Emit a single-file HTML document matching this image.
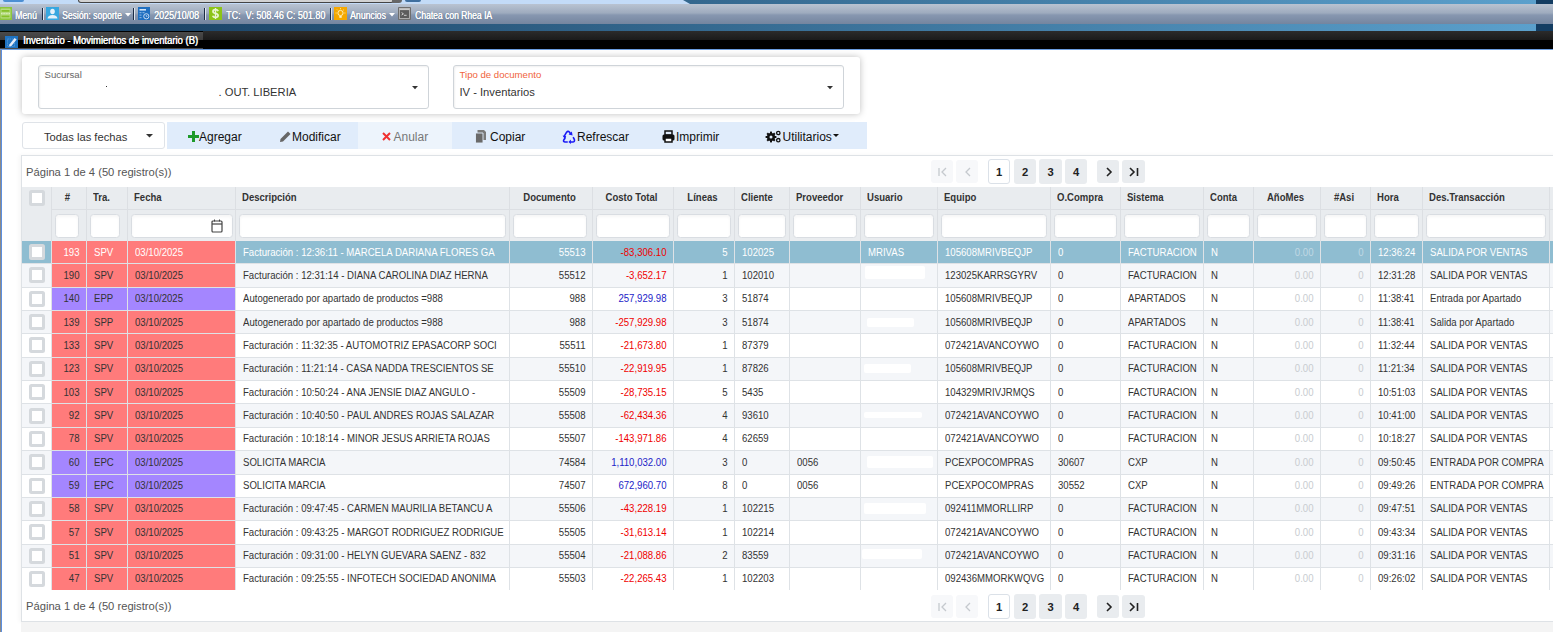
<!DOCTYPE html><html><head><meta charset="utf-8"><style>
html,body{margin:0;padding:0;}
body{width:1553px;height:632px;overflow:hidden;position:relative;background:#fff;font-family:"Liberation Sans", sans-serif;}
div{box-sizing:border-box;}
</style></head><body>
<div style="position:absolute;left:0px;top:0px;width:1553px;height:4px;background:#c3dbf7;"></div>
<div style="position:absolute;left:3px;top:0px;width:21px;height:1.6px;background:#4c8fd3;border-radius:0 0 5px 5px;"></div>
<div style="position:absolute;left:78px;top:0px;width:316px;height:3.2px;background:#d2d2d2;border:1px solid #444;border-top:none;border-radius:0 0 6px 6px;"></div>
<div style="position:absolute;left:392px;top:0px;width:10px;height:3.2px;background:#666;border-radius:0 0 5px 0;"></div>
<div style="position:absolute;left:405px;top:0px;width:16px;height:1.8px;background:#3f6f9f;border-radius:0 0 5px 5px;"></div>
<svg style="position:absolute;left:0;top:0" width="1553" height="4"><defs><linearGradient id="bg1" x1="0" x2="1553" y1="0" y2="0" gradientUnits="userSpaceOnUse"><stop offset="0" stop-color="#143a5c"/><stop offset="0.989" stop-color="#5ba0cc"/></linearGradient></defs><polygon points="683,0 1536,0 1536,4 690,4" fill="url(#bg1)"/><rect x="1536" y="0" width="17" height="4" fill="#133d62"/></svg>
<div style="position:absolute;left:0px;top:4px;width:1553px;height:20px;background:linear-gradient(#b9c3d1 0%,#9eabbe 45%,#8797b0 55%,#74859f 100%);"></div>
<svg style="position:absolute;left:-1px;top:7px" width="13" height="13" viewBox="0 0 13 13"><rect width="13" height="13" fill="#8cc63e"/><rect x="1.5" y="1.5" width="10" height="10" rx="1" fill="#b6dc80"/><rect x="2.5" y="3" width="8" height="1.8" fill="#86c02a"/><rect x="2.5" y="8.5" width="8" height="1.8" fill="#86c02a"/><line x1="2" y1="6.6" x2="11" y2="6.6" stroke="#e6f4d2" stroke-width="0.8" stroke-dasharray="1 0.6"/></svg>
<div style="position:absolute;left:14.5px;top:9.5px;white-space:nowrap;font-size:10px;color:#fff;line-height:12px;transform-origin:0 0;text-shadow:0.3px 0 0 #fff,0 0 1px rgba(20,30,60,.5);transform:scaleX(0.87);">Menú</div>
<div style="position:absolute;left:42px;top:8px;width:1px;height:12px;background:#1b2b44;"></div>
<div style="position:absolute;left:43px;top:8px;width:1px;height:12px;background:#dfe6ef;"></div>
<svg style="position:absolute;left:46px;top:7px" width="13" height="13" viewBox="0 0 13 13"><rect width="13" height="13" fill="#37a7e0"/><ellipse cx="6.5" cy="4.5" rx="2.3" ry="2.8" fill="#e6f2fa"/><path d="M1.5 11.5 Q2 8 6.5 8 Q11 8 11.5 11.5Z" fill="#e6f2fa"/></svg>
<div style="position:absolute;left:62px;top:9.5px;white-space:nowrap;font-size:10px;color:#fff;line-height:12px;transform-origin:0 0;text-shadow:0.3px 0 0 #fff,0 0 1px rgba(20,30,60,.5);transform:scaleX(0.86);">Sesión: soporte</div>
<svg style="position:absolute;left:125px;top:13px" width="6" height="4"><polygon points="0,0 6,0 3,3.5" fill="#fff"/></svg>
<div style="position:absolute;left:133px;top:8px;width:1px;height:12px;background:#1b2b44;"></div>
<div style="position:absolute;left:134px;top:8px;width:1px;height:12px;background:#dfe6ef;"></div>
<svg style="position:absolute;left:138px;top:7px" width="12" height="13" viewBox="0 0 12 13"><rect width="12" height="13" fill="#1f6fc0"/><rect x="1.5" y="2" width="6.5" height="1.6" fill="#cfe2f6"/><g fill="#7fb0e0"><rect x="1.5" y="5" width="2" height="1.2"/><rect x="4.5" y="5" width="2" height="1.2"/><rect x="1.5" y="7.5" width="2" height="1.2"/><rect x="1.5" y="10" width="2" height="1.2"/></g><circle cx="8.3" cy="9.3" r="2.6" fill="#1f6fc0" stroke="#d6e7f8" stroke-width="0.9"/><path d="M8.3 8 V9.4 H9.4" stroke="#d6e7f8" stroke-width="0.7" fill="none"/></svg>
<div style="position:absolute;left:154px;top:9.5px;white-space:nowrap;font-size:10px;color:#fff;line-height:12px;transform-origin:0 0;text-shadow:0.3px 0 0 #fff,0 0 1px rgba(20,30,60,.5);transform:scaleX(0.9);">2025/10/08</div>
<div style="position:absolute;left:204px;top:8px;width:1px;height:12px;background:#1b2b44;"></div>
<div style="position:absolute;left:205px;top:8px;width:1px;height:12px;background:#dfe6ef;"></div>
<svg style="position:absolute;left:209px;top:7px" width="13" height="13" viewBox="0 0 13 13"><rect width="13" height="13" fill="#8cc418"/><path d="M9.2 4.1 Q8.6 2.6 6.5 2.6 Q4 2.6 4 4.4 Q4 5.8 6.5 6.4 Q9.1 7 9.1 8.6 Q9.1 10.4 6.5 10.4 Q4.2 10.4 3.7 8.8" fill="none" stroke="#e8f5d0" stroke-width="1.7"/><rect x="5.8" y="1" width="1.4" height="11" fill="#e8f5d0"/></svg>
<div style="position:absolute;left:226px;top:9.5px;white-space:nowrap;font-size:10px;color:#fff;line-height:12px;transform-origin:0 0;text-shadow:0.3px 0 0 #fff,0 0 1px rgba(20,30,60,.5);transform:scaleX(0.9);">TC:&nbsp; V: 508.46 C: 501.80</div>
<div style="position:absolute;left:330px;top:8px;width:1px;height:12px;background:#1b2b44;"></div>
<div style="position:absolute;left:331px;top:8px;width:1px;height:12px;background:#dfe6ef;"></div>
<svg style="position:absolute;left:334px;top:7px" width="13" height="13" viewBox="0 0 13 13"><rect width="13" height="13" fill="#f5a800"/><circle cx="6.5" cy="6" r="2.6" fill="none" stroke="#fff3c0" stroke-width="0.9"/><rect x="5.3" y="8.8" width="2.4" height="2" fill="#fff3c0"/><g stroke="#fff3c0" stroke-width="0.7"><line x1="6.5" y1="1" x2="6.5" y2="2.2"/><line x1="1.5" y1="6" x2="2.7" y2="6"/><line x1="10.3" y1="6" x2="11.5" y2="6"/><line x1="3" y1="2.5" x2="3.8" y2="3.3"/><line x1="10" y1="2.5" x2="9.2" y2="3.3"/></g></svg>
<div style="position:absolute;left:350px;top:9.5px;white-space:nowrap;font-size:10px;color:#fff;line-height:12px;transform-origin:0 0;text-shadow:0.3px 0 0 #fff,0 0 1px rgba(20,30,60,.5);transform:scaleX(0.87);">Anuncios</div>
<svg style="position:absolute;left:389px;top:13px" width="6" height="4"><polygon points="0,0 6,0 3,3.5" fill="#fff"/></svg>
<svg style="position:absolute;left:398px;top:7px" width="13" height="13" viewBox="0 0 13 13"><rect width="13" height="13" rx="1" fill="#6e6e6e"/><rect x="1.5" y="1.5" width="10" height="10" fill="#5c5c5c" stroke="#b4b4b4" stroke-width="0.9"/><rect x="1.5" y="1.5" width="10" height="1.6" fill="#c8c8c8"/><path d="M3.6 5.6 L5.4 6.8 L3.6 8" fill="none" stroke="#e0e0e0" stroke-width="0.9"/><line x1="6" y1="8.3" x2="8.6" y2="8.3" stroke="#e0e0e0" stroke-width="0.9"/></svg>
<div style="position:absolute;left:415px;top:9.5px;white-space:nowrap;font-size:10px;color:#fff;line-height:12px;transform-origin:0 0;text-shadow:0.3px 0 0 #fff,0 0 1px rgba(20,30,60,.5);transform:scaleX(0.855);">Chatea con Rhea IA</div>
<svg style="position:absolute;left:0;top:24px" width="1553" height="7"><defs><linearGradient id="bg2" x1="0" x2="1553" y1="0" y2="0" gradientUnits="userSpaceOnUse"><stop offset="0" stop-color="#143a5c"/><stop offset="0.989" stop-color="#5ba0cc"/></linearGradient></defs><rect x="0" y="0" width="1536" height="7" fill="url(#bg2)"/><rect x="1536" y="0" width="17" height="7" fill="#133d62"/></svg>
<div style="position:absolute;left:0px;top:31px;width:1553px;height:18px;background:linear-gradient(#2b2b2b 0%,#1b1b1b 50%,#000 52%,#000 100%);"></div>
<div style="position:absolute;left:0px;top:31px;width:203px;height:18px;background:linear-gradient(#000 0px,#000 1px,#4a4a4a 1px,#3c3c3c 50%,#000 52%,#000 100%);"></div>
<svg style="position:absolute;left:5px;top:36px" width="13" height="12" viewBox="0 0 13 12"><rect width="13" height="12" fill="#1e73c2"/><rect x="2.5" y="3" width="7" height="7.5" fill="none" stroke="#5d9ad6" stroke-width="0.8" stroke-dasharray="1.4 0.8"/><path d="M4.4 8.4 L9.6 2 L11.6 3.6 L6.4 10 L4 10.6Z" fill="#e6ecf8"/></svg>
<div style="position:absolute;left:23px;top:34px;white-space:nowrap;font-size:10.5px;line-height:13px;color:#fff;transform:scaleX(0.9);transform-origin:0 0;text-shadow:0.5px 0 0 #fff;">Inventario - Movimientos de inventario (B)</div>
<div style="position:absolute;left:0px;top:49px;width:1553px;height:1px;background:#6b9de0;"></div>
<div style="position:absolute;left:0px;top:48px;width:203px;height:1px;background:#4a4a4a;"></div>
<div style="position:absolute;left:0px;top:50px;width:1px;height:582px;background:#8a8a8a;"></div>
<div style="position:absolute;left:1px;top:50px;width:1px;height:582px;background:#5b8fe0;"></div>
<div style="position:absolute;left:22px;top:57px;width:838px;height:57px;background:#fff;border-radius:3px;box-shadow:0 0 7px rgba(0,0,0,.26);"></div>
<div style="position:absolute;left:38px;top:65px;width:391px;height:44px;background:#fff;border:1px solid #cfd4d9;border-radius:3px;box-shadow:inset 1px 1px 2px rgba(0,0,0,.06);"></div>
<div style="position:absolute;left:44.5px;top:69.1px;white-space:nowrap;font-size:9.6px;line-height:11px;color:#666;">Sucursal</div>
<div style="position:absolute;left:44.5px;top:85px;white-space:nowrap;font-size:11.2px;line-height:14px;color:#333;"><span style="display:inline-block;width:174px"></span>. OUT. LIBERIA</div>
<svg style="position:absolute;left:411.5px;top:85.5px" width="6" height="4"><polygon points="0,0 6,0 3,3.2" fill="#333"/></svg>
<div style="position:absolute;left:453px;top:65px;width:391px;height:44px;background:#fff;border:1px solid #cfd4d9;border-radius:3px;box-shadow:inset 1px 1px 2px rgba(0,0,0,.06);"></div>
<div style="position:absolute;left:459.5px;top:69.1px;white-space:nowrap;font-size:9.6px;line-height:11px;color:#f0643c;">Tipo de documento</div>
<div style="position:absolute;left:459.5px;top:85px;white-space:nowrap;font-size:11.2px;line-height:14px;color:#333;">IV - Inventarios</div>
<svg style="position:absolute;left:826.5px;top:85.5px" width="6" height="4"><polygon points="0,0 6,0 3,3.2" fill="#333"/></svg>
<div style="position:absolute;left:106px;top:86px;width:1px;height:1px;background:#333;"></div>
<div style="position:absolute;left:22px;top:122px;width:143px;height:27px;background:#fff;border:1px solid #dfe3e8;border-radius:3px;"></div>
<div style="position:absolute;left:44px;top:130px;white-space:nowrap;font-size:11.2px;line-height:14px;color:#333;">Todas las fechas</div>
<svg style="position:absolute;left:146px;top:134px" width="7" height="4"><polygon points="0,0 7,0 3.5,3.5" fill="#333"/></svg>
<div style="position:absolute;left:167px;top:122px;width:191px;height:27px;background:#e0ecfb;"></div>
<div style="position:absolute;left:358px;top:122px;width:94px;height:27px;background:#edf4fc;"></div>
<div style="position:absolute;left:452px;top:122px;width:415px;height:27px;background:#e0ecfb;"></div>
<svg style="position:absolute;left:188px;top:131px" width="11" height="11" viewBox="0 0 11 11"><rect x="4" y="0" width="3" height="11" fill="#1e9a2a"/><rect x="0" y="4" width="11" height="3" fill="#1e9a2a"/></svg>
<div style="position:absolute;left:199px;top:130px;white-space:nowrap;font-size:12px;line-height:15px;color:#111;">Agregar</div>
<svg style="position:absolute;left:279px;top:130px" width="13" height="13" viewBox="0 0 13 13"><path d="M1 12 L1.5 9 L9 1.5 L11.5 4 L4 11.5Z" fill="#666"/></svg>
<div style="position:absolute;left:292px;top:130px;white-space:nowrap;font-size:12px;line-height:15px;color:#111;">Modificar</div>
<svg style="position:absolute;left:382px;top:132px" width="9" height="9" viewBox="0 0 9 9"><path d="M1 1 L8 8 M8 1 L1 8" stroke="#f03030" stroke-width="2"/></svg>
<div style="position:absolute;left:393.5px;top:130px;white-space:nowrap;font-size:12px;line-height:15px;color:#111;color:#777;">Anular</div>
<svg style="position:absolute;left:475px;top:130px" width="12" height="13" viewBox="0 0 12 13"><path d="M2.5 0 H9 L11 2 V10 H2.5Z" fill="#7a7a7a"/><path d="M0.5 3 H8 V13 H0.5Z" fill="#6a6a6a" stroke="#e0ecfb" stroke-width="0.9"/></svg>
<div style="position:absolute;left:490px;top:130px;white-space:nowrap;font-size:12px;line-height:15px;color:#111;">Copiar</div>
<svg style="position:absolute;left:561.5px;top:129.5px" width="14" height="14" viewBox="0 0 14 14"><g fill="none" stroke="#1a1af5" stroke-width="1.6" stroke-linecap="round"><path d="M2.3 6.2 L4.6 2.2 Q6 0.6 7.4 2 L8.2 3.2"/><path d="M2.6 8.6 L1.6 10.4 Q1.2 11.9 3 12 L5.2 12"/><path d="M11.4 7.6 L12.4 9.6 Q12.9 11.9 10.8 12 L8.6 12"/></g><path d="M6.6 4.4 L10.6 5.6 L9.8 1.6Z" fill="#1a1af5"/><path d="M8.9 9.6 L6.4 12 L8.9 14Z" fill="#1a1af5"/><path d="M0.6 5.6 L4.2 6.2 L3.2 9.4Z" fill="#1a1af5"/></svg>
<div style="position:absolute;left:577px;top:130px;white-space:nowrap;font-size:12px;line-height:15px;color:#111;">Refrescar</div>
<svg style="position:absolute;left:662px;top:130px" width="13" height="13" viewBox="0 0 13 13"><rect x="3" y="1" width="7" height="4" fill="none" stroke="#111" stroke-width="1.5"/><rect x="0.5" y="4.5" width="12" height="6" rx="1.5" fill="#111"/><rect x="3" y="8" width="7" height="4" fill="#fff" stroke="#111" stroke-width="1.5"/></svg>
<div style="position:absolute;left:676px;top:130px;white-space:nowrap;font-size:12px;line-height:15px;color:#111;">Imprimir</div>
<svg style="position:absolute;left:765px;top:130px" width="16" height="13" viewBox="0 0 16 13"><g fill="#111"><circle cx="6" cy="7" r="4"/><rect x="5" y="1.6" width="2" height="10.8"/><rect x="0.6" y="6" width="10.8" height="2"/><rect x="5" y="1.6" width="2" height="10.8" transform="rotate(45 6 7)"/><rect x="5" y="1.6" width="2" height="10.8" transform="rotate(-45 6 7)"/></g><circle cx="6" cy="7" r="1.5" fill="#e0ecfb"/><circle cx="13.3" cy="3" r="1.7" fill="none" stroke="#111" stroke-width="1.3"/><circle cx="13.3" cy="10.2" r="1.7" fill="none" stroke="#111" stroke-width="1.3"/></svg>
<div style="position:absolute;left:782.5px;top:130px;white-space:nowrap;font-size:12px;line-height:15px;color:#111;">Utilitarios</div>
<svg style="position:absolute;left:833px;top:134px" width="6" height="4"><polygon points="0,0 6,0 3,3" fill="#111"/></svg>
<div style="position:absolute;left:21px;top:155px;width:1540px;height:467px;background:#fff;border:1px solid #dee2e6;box-shadow:-2px 0 4px rgba(0,0,0,.04);"></div>
<div style="position:absolute;left:21px;top:622px;width:1532px;height:10px;background:#f4f4f4;"></div>
<div style="position:absolute;left:26px;top:165px;white-space:nowrap;font-size:11.2px;line-height:14px;color:#555;">Página 1 de 4 (50 registro(s))</div>
<div style="position:absolute;left:26px;top:599.3px;white-space:nowrap;font-size:11.2px;line-height:14px;color:#555;">Página 1 de 4 (50 registro(s))</div>
<div style="position:absolute;left:931px;top:160px;width:22px;height:23px;background:#f7f8fa;border-radius:3px;"></div>
<div style="position:absolute;left:956px;top:160px;width:22px;height:23px;background:#f7f8fa;border-radius:3px;"></div>
<div style="position:absolute;left:988px;top:159px;width:22px;height:25px;background:#fff;border:1px solid #dbe1e8;border-radius:3px;"></div>
<div style="position:absolute;left:988px;top:164.5px;width:22px;text-align:center;font-size:11.2px;line-height:14px;font-weight:bold;color:#222;">1</div>
<div style="position:absolute;left:1014px;top:159px;width:22px;height:25px;background:#e9ecef;border-radius:3px;"></div>
<div style="position:absolute;left:1014px;top:164.5px;width:22px;text-align:center;font-size:11.2px;line-height:14px;font-weight:bold;color:#222;">2</div>
<div style="position:absolute;left:1039px;top:159px;width:23px;height:25px;background:#e9ecef;border-radius:3px;"></div>
<div style="position:absolute;left:1039px;top:164.5px;width:23px;text-align:center;font-size:11.2px;line-height:14px;font-weight:bold;color:#222;">3</div>
<div style="position:absolute;left:1065px;top:159px;width:22px;height:25px;background:#e9ecef;border-radius:3px;"></div>
<div style="position:absolute;left:1065px;top:164.5px;width:22px;text-align:center;font-size:11.2px;line-height:14px;font-weight:bold;color:#222;">4</div>
<div style="position:absolute;left:1097px;top:160px;width:22px;height:23px;background:#e9ecef;border-radius:3px;"></div>
<div style="position:absolute;left:1122px;top:160px;width:23px;height:23px;background:#e9ecef;border-radius:3px;"></div>
<svg style="position:absolute;left:938px;top:167px" width="10" height="10" viewBox="0 0 10 10"><path d="M1 1 V9 M8 1 L4 5 L8 9" fill="none" stroke="#c5c9ce" stroke-width="1.3"/></svg>
<svg style="position:absolute;left:963px;top:167px" width="10" height="10" viewBox="0 0 10 10"><path d="M7 1 L3 5 L7 9" fill="none" stroke="#c5c9ce" stroke-width="1.3"/></svg>
<svg style="position:absolute;left:1104px;top:167px" width="10" height="10" viewBox="0 0 10 10"><path d="M3 1 L7 5 L3 9" fill="none" stroke="#222" stroke-width="1.6"/></svg>
<svg style="position:absolute;left:1129px;top:167px" width="10" height="10" viewBox="0 0 10 10"><path d="M1 1 L5 5 L1 9 M8.5 1 V9" fill="none" stroke="#222" stroke-width="1.6"/></svg>
<div style="position:absolute;left:931px;top:595px;width:22px;height:23px;background:#f7f8fa;border-radius:3px;"></div>
<div style="position:absolute;left:956px;top:595px;width:22px;height:23px;background:#f7f8fa;border-radius:3px;"></div>
<div style="position:absolute;left:988px;top:594px;width:22px;height:25px;background:#fff;border:1px solid #dbe1e8;border-radius:3px;"></div>
<div style="position:absolute;left:988px;top:599.5px;width:22px;text-align:center;font-size:11.2px;line-height:14px;font-weight:bold;color:#222;">1</div>
<div style="position:absolute;left:1014px;top:594px;width:22px;height:25px;background:#e9ecef;border-radius:3px;"></div>
<div style="position:absolute;left:1014px;top:599.5px;width:22px;text-align:center;font-size:11.2px;line-height:14px;font-weight:bold;color:#222;">2</div>
<div style="position:absolute;left:1039px;top:594px;width:23px;height:25px;background:#e9ecef;border-radius:3px;"></div>
<div style="position:absolute;left:1039px;top:599.5px;width:23px;text-align:center;font-size:11.2px;line-height:14px;font-weight:bold;color:#222;">3</div>
<div style="position:absolute;left:1065px;top:594px;width:22px;height:25px;background:#e9ecef;border-radius:3px;"></div>
<div style="position:absolute;left:1065px;top:599.5px;width:22px;text-align:center;font-size:11.2px;line-height:14px;font-weight:bold;color:#222;">4</div>
<div style="position:absolute;left:1097px;top:595px;width:22px;height:23px;background:#e9ecef;border-radius:3px;"></div>
<div style="position:absolute;left:1122px;top:595px;width:23px;height:23px;background:#e9ecef;border-radius:3px;"></div>
<svg style="position:absolute;left:938px;top:602px" width="10" height="10" viewBox="0 0 10 10"><path d="M1 1 V9 M8 1 L4 5 L8 9" fill="none" stroke="#c5c9ce" stroke-width="1.3"/></svg>
<svg style="position:absolute;left:963px;top:602px" width="10" height="10" viewBox="0 0 10 10"><path d="M7 1 L3 5 L7 9" fill="none" stroke="#c5c9ce" stroke-width="1.3"/></svg>
<svg style="position:absolute;left:1104px;top:602px" width="10" height="10" viewBox="0 0 10 10"><path d="M3 1 L7 5 L3 9" fill="none" stroke="#222" stroke-width="1.6"/></svg>
<svg style="position:absolute;left:1129px;top:602px" width="10" height="10" viewBox="0 0 10 10"><path d="M1 1 L5 5 L1 9 M8.5 1 V9" fill="none" stroke="#222" stroke-width="1.6"/></svg>
<div style="position:absolute;left:22px;top:187px;width:1531px;height:54px;background:#e9ecef;"></div>
<div style="position:absolute;left:51px;top:209px;width:1502px;height:1px;background:#dcdfe3;"></div>
<div style="position:absolute;left:51px;top:187px;width:1px;height:54px;background:#dcdfe3;"></div>
<div style="position:absolute;left:86px;top:187px;width:1px;height:54px;background:#dcdfe3;"></div>
<div style="position:absolute;left:127px;top:187px;width:1px;height:54px;background:#dcdfe3;"></div>
<div style="position:absolute;left:235px;top:187px;width:1px;height:54px;background:#dcdfe3;"></div>
<div style="position:absolute;left:509px;top:187px;width:1px;height:54px;background:#dcdfe3;"></div>
<div style="position:absolute;left:592px;top:187px;width:1px;height:54px;background:#dcdfe3;"></div>
<div style="position:absolute;left:673px;top:187px;width:1px;height:54px;background:#dcdfe3;"></div>
<div style="position:absolute;left:734px;top:187px;width:1px;height:54px;background:#dcdfe3;"></div>
<div style="position:absolute;left:789px;top:187px;width:1px;height:54px;background:#dcdfe3;"></div>
<div style="position:absolute;left:860px;top:187px;width:1px;height:54px;background:#dcdfe3;"></div>
<div style="position:absolute;left:937px;top:187px;width:1px;height:54px;background:#dcdfe3;"></div>
<div style="position:absolute;left:1050px;top:187px;width:1px;height:54px;background:#dcdfe3;"></div>
<div style="position:absolute;left:1120px;top:187px;width:1px;height:54px;background:#dcdfe3;"></div>
<div style="position:absolute;left:1203px;top:187px;width:1px;height:54px;background:#dcdfe3;"></div>
<div style="position:absolute;left:1253px;top:187px;width:1px;height:54px;background:#dcdfe3;"></div>
<div style="position:absolute;left:1320px;top:187px;width:1px;height:54px;background:#dcdfe3;"></div>
<div style="position:absolute;left:1370px;top:187px;width:1px;height:54px;background:#dcdfe3;"></div>
<div style="position:absolute;left:1422px;top:187px;width:1px;height:54px;background:#dcdfe3;"></div>
<div style="position:absolute;left:1549px;top:187px;width:1px;height:54px;background:#dcdfe3;"></div>
<div style="position:absolute;left:49.8px;top:192px;width:35px;text-align:center;white-space:nowrap;transform:scaleX(0.955);font-size:10px;line-height:12px;font-weight:bold;color:#333;">#</div>
<div style="position:absolute;left:93px;top:192px;white-space:nowrap;transform:scaleX(0.955);transform-origin:0 0;font-size:10px;line-height:12px;font-weight:bold;color:#333;">Tra.</div>
<div style="position:absolute;left:134px;top:192px;white-space:nowrap;transform:scaleX(0.955);transform-origin:0 0;font-size:10px;line-height:12px;font-weight:bold;color:#333;">Fecha</div>
<div style="position:absolute;left:242px;top:192px;white-space:nowrap;transform:scaleX(0.955);transform-origin:0 0;font-size:10px;line-height:12px;font-weight:bold;color:#333;">Descripción</div>
<div style="position:absolute;left:507.8px;top:192px;width:83px;text-align:center;white-space:nowrap;transform:scaleX(0.955);font-size:10px;line-height:12px;font-weight:bold;color:#333;">Documento</div>
<div style="position:absolute;left:590.8px;top:192px;width:81px;text-align:center;white-space:nowrap;transform:scaleX(0.955);font-size:10px;line-height:12px;font-weight:bold;color:#333;">Costo Total</div>
<div style="position:absolute;left:671.8px;top:192px;width:61px;text-align:center;white-space:nowrap;transform:scaleX(0.955);font-size:10px;line-height:12px;font-weight:bold;color:#333;">Líneas</div>
<div style="position:absolute;left:741px;top:192px;white-space:nowrap;transform:scaleX(0.955);transform-origin:0 0;font-size:10px;line-height:12px;font-weight:bold;color:#333;">Cliente</div>
<div style="position:absolute;left:796px;top:192px;white-space:nowrap;transform:scaleX(0.955);transform-origin:0 0;font-size:10px;line-height:12px;font-weight:bold;color:#333;">Proveedor</div>
<div style="position:absolute;left:867px;top:192px;white-space:nowrap;transform:scaleX(0.955);transform-origin:0 0;font-size:10px;line-height:12px;font-weight:bold;color:#333;">Usuario</div>
<div style="position:absolute;left:944px;top:192px;white-space:nowrap;transform:scaleX(0.955);transform-origin:0 0;font-size:10px;line-height:12px;font-weight:bold;color:#333;">Equipo</div>
<div style="position:absolute;left:1057px;top:192px;white-space:nowrap;transform:scaleX(0.955);transform-origin:0 0;font-size:10px;line-height:12px;font-weight:bold;color:#333;">O.Compra</div>
<div style="position:absolute;left:1127px;top:192px;white-space:nowrap;transform:scaleX(0.955);transform-origin:0 0;font-size:10px;line-height:12px;font-weight:bold;color:#333;">Sistema</div>
<div style="position:absolute;left:1210px;top:192px;white-space:nowrap;transform:scaleX(0.955);transform-origin:0 0;font-size:10px;line-height:12px;font-weight:bold;color:#333;">Conta</div>
<div style="position:absolute;left:1251.8px;top:192px;width:67px;text-align:center;white-space:nowrap;transform:scaleX(0.955);font-size:10px;line-height:12px;font-weight:bold;color:#333;">AñoMes</div>
<div style="position:absolute;left:1318.8px;top:192px;width:50px;text-align:center;white-space:nowrap;transform:scaleX(0.955);font-size:10px;line-height:12px;font-weight:bold;color:#333;">#Asi</div>
<div style="position:absolute;left:1377px;top:192px;white-space:nowrap;transform:scaleX(0.955);transform-origin:0 0;font-size:10px;line-height:12px;font-weight:bold;color:#333;">Hora</div>
<div style="position:absolute;left:1429px;top:192px;white-space:nowrap;transform:scaleX(0.955);transform-origin:0 0;font-size:10px;line-height:12px;font-weight:bold;color:#333;">Des.Transacción</div>
<div style="position:absolute;left:29px;top:190px;width:16px;height:16px;background:#fff;border:3px solid #d5d9dd;border-radius:2.5px;"></div>
<div style="position:absolute;left:55px;top:214px;width:24px;height:24px;background:#fff;border:1px solid #d9dde2;border-radius:3.5px;box-shadow:inset 0 2px 3px rgba(0,0,0,.04);"></div>
<div style="position:absolute;left:90px;top:214px;width:30px;height:24px;background:#fff;border:1px solid #d9dde2;border-radius:3.5px;box-shadow:inset 0 2px 3px rgba(0,0,0,.04);"></div>
<div style="position:absolute;left:131px;top:214px;width:102px;height:24px;background:#fff;border:1px solid #d9dde2;border-radius:3.5px;box-shadow:inset 0 2px 3px rgba(0,0,0,.04);"></div>
<div style="position:absolute;left:239px;top:214px;width:267px;height:24px;background:#fff;border:1px solid #d9dde2;border-radius:3.5px;box-shadow:inset 0 2px 3px rgba(0,0,0,.04);"></div>
<div style="position:absolute;left:513px;top:214px;width:74px;height:24px;background:#fff;border:1px solid #d9dde2;border-radius:3.5px;box-shadow:inset 0 2px 3px rgba(0,0,0,.04);"></div>
<div style="position:absolute;left:596px;top:214px;width:74px;height:24px;background:#fff;border:1px solid #d9dde2;border-radius:3.5px;box-shadow:inset 0 2px 3px rgba(0,0,0,.04);"></div>
<div style="position:absolute;left:677px;top:214px;width:54px;height:24px;background:#fff;border:1px solid #d9dde2;border-radius:3.5px;box-shadow:inset 0 2px 3px rgba(0,0,0,.04);"></div>
<div style="position:absolute;left:738px;top:214px;width:48px;height:24px;background:#fff;border:1px solid #d9dde2;border-radius:3.5px;box-shadow:inset 0 2px 3px rgba(0,0,0,.04);"></div>
<div style="position:absolute;left:793px;top:214px;width:64px;height:24px;background:#fff;border:1px solid #d9dde2;border-radius:3.5px;box-shadow:inset 0 2px 3px rgba(0,0,0,.04);"></div>
<div style="position:absolute;left:864px;top:214px;width:70px;height:24px;background:#fff;border:1px solid #d9dde2;border-radius:3.5px;box-shadow:inset 0 2px 3px rgba(0,0,0,.04);"></div>
<div style="position:absolute;left:941px;top:214px;width:106px;height:24px;background:#fff;border:1px solid #d9dde2;border-radius:3.5px;box-shadow:inset 0 2px 3px rgba(0,0,0,.04);"></div>
<div style="position:absolute;left:1054px;top:214px;width:63px;height:24px;background:#fff;border:1px solid #d9dde2;border-radius:3.5px;box-shadow:inset 0 2px 3px rgba(0,0,0,.04);"></div>
<div style="position:absolute;left:1124px;top:214px;width:76px;height:24px;background:#fff;border:1px solid #d9dde2;border-radius:3.5px;box-shadow:inset 0 2px 3px rgba(0,0,0,.04);"></div>
<div style="position:absolute;left:1207px;top:214px;width:43px;height:24px;background:#fff;border:1px solid #d9dde2;border-radius:3.5px;box-shadow:inset 0 2px 3px rgba(0,0,0,.04);"></div>
<div style="position:absolute;left:1257px;top:214px;width:60px;height:24px;background:#fff;border:1px solid #d9dde2;border-radius:3.5px;box-shadow:inset 0 2px 3px rgba(0,0,0,.04);"></div>
<div style="position:absolute;left:1324px;top:214px;width:43px;height:24px;background:#fff;border:1px solid #d9dde2;border-radius:3.5px;box-shadow:inset 0 2px 3px rgba(0,0,0,.04);"></div>
<div style="position:absolute;left:1374px;top:214px;width:45px;height:24px;background:#fff;border:1px solid #d9dde2;border-radius:3.5px;box-shadow:inset 0 2px 3px rgba(0,0,0,.04);"></div>
<div style="position:absolute;left:1426px;top:214px;width:120px;height:24px;background:#fff;border:1px solid #d9dde2;border-radius:3.5px;box-shadow:inset 0 2px 3px rgba(0,0,0,.04);"></div>
<svg style="position:absolute;left:211px;top:219px" width="12" height="14" viewBox="0 0 12 14"><rect x="1" y="2" width="10" height="11" rx="1" fill="none" stroke="#444" stroke-width="1.2"/><line x1="1" y1="5" x2="11" y2="5" stroke="#444" stroke-width="1.2"/><line x1="3.5" y1="0.5" x2="3.5" y2="2.5" stroke="#444" stroke-width="1.1"/><line x1="8.5" y1="0.5" x2="8.5" y2="2.5" stroke="#444" stroke-width="1.1"/></svg>
<div style="position:absolute;left:22px;top:241.01px;width:1531px;height:23.35px;background:#8fbdd1;"></div>
<div style="position:absolute;left:22px;top:263.36px;width:1531px;height:1px;background:#dee2e6;"></div>
<div style="position:absolute;left:51px;top:241.01px;width:35px;height:22.35px;background:#ff7b7b;"></div>
<div style="position:absolute;left:86px;top:241.01px;width:41px;height:22.35px;background:#ff7b7b;"></div>
<div style="position:absolute;left:127px;top:241.01px;width:108px;height:22.35px;background:#ff7b7b;"></div>
<div style="position:absolute;left:29px;top:244.07px;width:16px;height:16px;background:#fff;border:3px solid #d5d9dd;border-radius:2.5px;"></div>
<div style="position:absolute;left:51px;top:246.51px;width:28.5px;text-align:right;transform:scaleX(0.96);transform-origin:100% 0;font-size:10px;line-height:12px;white-space:nowrap;color:#fff;">193</div>
<div style="position:absolute;left:93.7px;top:246.51px;transform:scaleX(0.96);transform-origin:0 0;font-size:10px;line-height:12px;white-space:nowrap;color:#fff;">SPV</div>
<div style="position:absolute;left:134.7px;top:246.51px;transform:scaleX(0.96);transform-origin:0 0;font-size:10px;line-height:12px;white-space:nowrap;color:#fff;">03/10/2025</div>
<div style="position:absolute;left:242.7px;top:246.51px;transform:scaleX(0.96);transform-origin:0 0;font-size:10px;line-height:12px;white-space:nowrap;color:#fff;">Facturación : 12:36:11 - MARCELA DARIANA FLORES GA</div>
<div style="position:absolute;left:509px;top:246.51px;width:76.5px;text-align:right;transform:scaleX(0.96);transform-origin:100% 0;font-size:10px;line-height:12px;white-space:nowrap;color:#fff;">55513</div>
<div style="position:absolute;left:592px;top:246.51px;width:74.5px;text-align:right;transform:scaleX(0.96);transform-origin:100% 0;font-size:10px;line-height:12px;white-space:nowrap;color:#f00000;">-83,306.10</div>
<div style="position:absolute;left:673px;top:246.51px;width:54.5px;text-align:right;transform:scaleX(0.96);transform-origin:100% 0;font-size:10px;line-height:12px;white-space:nowrap;color:#fff;">5</div>
<div style="position:absolute;left:741.7px;top:246.51px;transform:scaleX(0.96);transform-origin:0 0;font-size:10px;line-height:12px;white-space:nowrap;color:#fff;">102025</div>
<div style="position:absolute;left:867.7px;top:246.51px;transform:scaleX(0.96);transform-origin:0 0;font-size:10px;line-height:12px;white-space:nowrap;color:#fff;">MRIVAS</div>
<div style="position:absolute;left:944.7px;top:246.51px;transform:scaleX(0.96);transform-origin:0 0;font-size:10px;line-height:12px;white-space:nowrap;color:#fff;">105608MRIVBEQJP</div>
<div style="position:absolute;left:1057.7px;top:246.51px;transform:scaleX(0.96);transform-origin:0 0;font-size:10px;line-height:12px;white-space:nowrap;color:#fff;">0</div>
<div style="position:absolute;left:1127.7px;top:246.51px;transform:scaleX(0.96);transform-origin:0 0;font-size:10px;line-height:12px;white-space:nowrap;color:#fff;">FACTURACION</div>
<div style="position:absolute;left:1210.7px;top:246.51px;transform:scaleX(0.96);transform-origin:0 0;font-size:10px;line-height:12px;white-space:nowrap;color:#fff;">N</div>
<div style="position:absolute;left:1253px;top:246.51px;width:60.5px;text-align:right;transform:scaleX(0.96);transform-origin:100% 0;font-size:10px;line-height:12px;white-space:nowrap;color:#c0d8e4;">0.00</div>
<div style="position:absolute;left:1320px;top:246.51px;width:43.5px;text-align:right;transform:scaleX(0.96);transform-origin:100% 0;font-size:10px;line-height:12px;white-space:nowrap;color:#c0d8e4;">0</div>
<div style="position:absolute;left:1377.7px;top:246.51px;transform:scaleX(0.96);transform-origin:0 0;font-size:10px;line-height:12px;white-space:nowrap;color:#fff;">12:36:24</div>
<div style="position:absolute;left:1429.7px;top:246.51px;transform:scaleX(0.96);transform-origin:0 0;font-size:10px;line-height:12px;white-space:nowrap;color:#fff;">SALIDA POR VENTAS</div>
<div style="position:absolute;left:22px;top:264.36px;width:1531px;height:23.35px;background:#f4f6f9;"></div>
<div style="position:absolute;left:22px;top:286.71000000000004px;width:1531px;height:1px;background:#dee2e6;"></div>
<div style="position:absolute;left:51px;top:264.36px;width:35px;height:22.35px;background:#ff7b7b;"></div>
<div style="position:absolute;left:86px;top:264.36px;width:41px;height:22.35px;background:#ff7b7b;"></div>
<div style="position:absolute;left:127px;top:264.36px;width:108px;height:22.35px;background:#ff7b7b;"></div>
<div style="position:absolute;left:29px;top:267.42px;width:16px;height:16px;background:#fff;border:3px solid #d5d9dd;border-radius:2.5px;"></div>
<div style="position:absolute;left:51px;top:269.86px;width:28.5px;text-align:right;transform:scaleX(0.96);transform-origin:100% 0;font-size:10px;line-height:12px;white-space:nowrap;color:#333;">190</div>
<div style="position:absolute;left:93.7px;top:269.86px;transform:scaleX(0.96);transform-origin:0 0;font-size:10px;line-height:12px;white-space:nowrap;color:#333;">SPV</div>
<div style="position:absolute;left:134.7px;top:269.86px;transform:scaleX(0.96);transform-origin:0 0;font-size:10px;line-height:12px;white-space:nowrap;color:#333;">03/10/2025</div>
<div style="position:absolute;left:242.7px;top:269.86px;transform:scaleX(0.96);transform-origin:0 0;font-size:10px;line-height:12px;white-space:nowrap;color:#333;">Facturación : 12:31:14 - DIANA CAROLINA DIAZ HERNA</div>
<div style="position:absolute;left:509px;top:269.86px;width:76.5px;text-align:right;transform:scaleX(0.96);transform-origin:100% 0;font-size:10px;line-height:12px;white-space:nowrap;color:#333;">55512</div>
<div style="position:absolute;left:592px;top:269.86px;width:74.5px;text-align:right;transform:scaleX(0.96);transform-origin:100% 0;font-size:10px;line-height:12px;white-space:nowrap;color:#f00000;">-3,652.17</div>
<div style="position:absolute;left:673px;top:269.86px;width:54.5px;text-align:right;transform:scaleX(0.96);transform-origin:100% 0;font-size:10px;line-height:12px;white-space:nowrap;color:#333;">1</div>
<div style="position:absolute;left:741.7px;top:269.86px;transform:scaleX(0.96);transform-origin:0 0;font-size:10px;line-height:12px;white-space:nowrap;color:#333;">102010</div>
<div style="position:absolute;left:944.7px;top:269.86px;transform:scaleX(0.96);transform-origin:0 0;font-size:10px;line-height:12px;white-space:nowrap;color:#333;">123025KARRSGYRV</div>
<div style="position:absolute;left:1057.7px;top:269.86px;transform:scaleX(0.96);transform-origin:0 0;font-size:10px;line-height:12px;white-space:nowrap;color:#333;">0</div>
<div style="position:absolute;left:1127.7px;top:269.86px;transform:scaleX(0.96);transform-origin:0 0;font-size:10px;line-height:12px;white-space:nowrap;color:#333;">FACTURACION</div>
<div style="position:absolute;left:1210.7px;top:269.86px;transform:scaleX(0.96);transform-origin:0 0;font-size:10px;line-height:12px;white-space:nowrap;color:#333;">N</div>
<div style="position:absolute;left:1253px;top:269.86px;width:60.5px;text-align:right;transform:scaleX(0.96);transform-origin:100% 0;font-size:10px;line-height:12px;white-space:nowrap;color:#c8ccd0;">0.00</div>
<div style="position:absolute;left:1320px;top:269.86px;width:43.5px;text-align:right;transform:scaleX(0.96);transform-origin:100% 0;font-size:10px;line-height:12px;white-space:nowrap;color:#c8ccd0;">0</div>
<div style="position:absolute;left:1377.7px;top:269.86px;transform:scaleX(0.96);transform-origin:0 0;font-size:10px;line-height:12px;white-space:nowrap;color:#333;">12:31:28</div>
<div style="position:absolute;left:1429.7px;top:269.86px;transform:scaleX(0.96);transform-origin:0 0;font-size:10px;line-height:12px;white-space:nowrap;color:#333;">SALIDA POR VENTAS</div>
<div style="position:absolute;left:22px;top:287.71px;width:1531px;height:23.35px;background:#fff;"></div>
<div style="position:absolute;left:22px;top:310.06px;width:1531px;height:1px;background:#dee2e6;"></div>
<div style="position:absolute;left:51px;top:287.71px;width:35px;height:22.35px;background:#a486ff;"></div>
<div style="position:absolute;left:86px;top:287.71px;width:41px;height:22.35px;background:#a486ff;"></div>
<div style="position:absolute;left:127px;top:287.71px;width:108px;height:22.35px;background:#a486ff;"></div>
<div style="position:absolute;left:29px;top:290.77px;width:16px;height:16px;background:#fff;border:3px solid #d5d9dd;border-radius:2.5px;"></div>
<div style="position:absolute;left:51px;top:293.21px;width:28.5px;text-align:right;transform:scaleX(0.96);transform-origin:100% 0;font-size:10px;line-height:12px;white-space:nowrap;color:#333;">140</div>
<div style="position:absolute;left:93.7px;top:293.21px;transform:scaleX(0.96);transform-origin:0 0;font-size:10px;line-height:12px;white-space:nowrap;color:#333;">EPP</div>
<div style="position:absolute;left:134.7px;top:293.21px;transform:scaleX(0.96);transform-origin:0 0;font-size:10px;line-height:12px;white-space:nowrap;color:#333;">03/10/2025</div>
<div style="position:absolute;left:242.7px;top:293.21px;transform:scaleX(0.96);transform-origin:0 0;font-size:10px;line-height:12px;white-space:nowrap;color:#333;">Autogenerado por apartado de productos =988</div>
<div style="position:absolute;left:509px;top:293.21px;width:76.5px;text-align:right;transform:scaleX(0.96);transform-origin:100% 0;font-size:10px;line-height:12px;white-space:nowrap;color:#333;">988</div>
<div style="position:absolute;left:592px;top:293.21px;width:74.5px;text-align:right;transform:scaleX(0.96);transform-origin:100% 0;font-size:10px;line-height:12px;white-space:nowrap;color:#1c1cc8;">257,929.98</div>
<div style="position:absolute;left:673px;top:293.21px;width:54.5px;text-align:right;transform:scaleX(0.96);transform-origin:100% 0;font-size:10px;line-height:12px;white-space:nowrap;color:#333;">3</div>
<div style="position:absolute;left:741.7px;top:293.21px;transform:scaleX(0.96);transform-origin:0 0;font-size:10px;line-height:12px;white-space:nowrap;color:#333;">51874</div>
<div style="position:absolute;left:944.7px;top:293.21px;transform:scaleX(0.96);transform-origin:0 0;font-size:10px;line-height:12px;white-space:nowrap;color:#333;">105608MRIVBEQJP</div>
<div style="position:absolute;left:1057.7px;top:293.21px;transform:scaleX(0.96);transform-origin:0 0;font-size:10px;line-height:12px;white-space:nowrap;color:#333;">0</div>
<div style="position:absolute;left:1127.7px;top:293.21px;transform:scaleX(0.96);transform-origin:0 0;font-size:10px;line-height:12px;white-space:nowrap;color:#333;">APARTADOS</div>
<div style="position:absolute;left:1210.7px;top:293.21px;transform:scaleX(0.96);transform-origin:0 0;font-size:10px;line-height:12px;white-space:nowrap;color:#333;">N</div>
<div style="position:absolute;left:1253px;top:293.21px;width:60.5px;text-align:right;transform:scaleX(0.96);transform-origin:100% 0;font-size:10px;line-height:12px;white-space:nowrap;color:#c8ccd0;">0.00</div>
<div style="position:absolute;left:1320px;top:293.21px;width:43.5px;text-align:right;transform:scaleX(0.96);transform-origin:100% 0;font-size:10px;line-height:12px;white-space:nowrap;color:#c8ccd0;">0</div>
<div style="position:absolute;left:1377.7px;top:293.21px;transform:scaleX(0.96);transform-origin:0 0;font-size:10px;line-height:12px;white-space:nowrap;color:#333;">11:38:41</div>
<div style="position:absolute;left:1429.7px;top:293.21px;transform:scaleX(0.96);transform-origin:0 0;font-size:10px;line-height:12px;white-space:nowrap;color:#333;">Entrada por Apartado</div>
<div style="position:absolute;left:22px;top:311.06px;width:1531px;height:23.35px;background:#f4f6f9;"></div>
<div style="position:absolute;left:22px;top:333.41px;width:1531px;height:1px;background:#dee2e6;"></div>
<div style="position:absolute;left:51px;top:311.06px;width:35px;height:22.35px;background:#ff7b7b;"></div>
<div style="position:absolute;left:86px;top:311.06px;width:41px;height:22.35px;background:#ff7b7b;"></div>
<div style="position:absolute;left:127px;top:311.06px;width:108px;height:22.35px;background:#ff7b7b;"></div>
<div style="position:absolute;left:29px;top:314.12px;width:16px;height:16px;background:#fff;border:3px solid #d5d9dd;border-radius:2.5px;"></div>
<div style="position:absolute;left:51px;top:316.56px;width:28.5px;text-align:right;transform:scaleX(0.96);transform-origin:100% 0;font-size:10px;line-height:12px;white-space:nowrap;color:#333;">139</div>
<div style="position:absolute;left:93.7px;top:316.56px;transform:scaleX(0.96);transform-origin:0 0;font-size:10px;line-height:12px;white-space:nowrap;color:#333;">SPP</div>
<div style="position:absolute;left:134.7px;top:316.56px;transform:scaleX(0.96);transform-origin:0 0;font-size:10px;line-height:12px;white-space:nowrap;color:#333;">03/10/2025</div>
<div style="position:absolute;left:242.7px;top:316.56px;transform:scaleX(0.96);transform-origin:0 0;font-size:10px;line-height:12px;white-space:nowrap;color:#333;">Autogenerado por apartado de productos =988</div>
<div style="position:absolute;left:509px;top:316.56px;width:76.5px;text-align:right;transform:scaleX(0.96);transform-origin:100% 0;font-size:10px;line-height:12px;white-space:nowrap;color:#333;">988</div>
<div style="position:absolute;left:592px;top:316.56px;width:74.5px;text-align:right;transform:scaleX(0.96);transform-origin:100% 0;font-size:10px;line-height:12px;white-space:nowrap;color:#f00000;">-257,929.98</div>
<div style="position:absolute;left:673px;top:316.56px;width:54.5px;text-align:right;transform:scaleX(0.96);transform-origin:100% 0;font-size:10px;line-height:12px;white-space:nowrap;color:#333;">3</div>
<div style="position:absolute;left:741.7px;top:316.56px;transform:scaleX(0.96);transform-origin:0 0;font-size:10px;line-height:12px;white-space:nowrap;color:#333;">51874</div>
<div style="position:absolute;left:944.7px;top:316.56px;transform:scaleX(0.96);transform-origin:0 0;font-size:10px;line-height:12px;white-space:nowrap;color:#333;">105608MRIVBEQJP</div>
<div style="position:absolute;left:1057.7px;top:316.56px;transform:scaleX(0.96);transform-origin:0 0;font-size:10px;line-height:12px;white-space:nowrap;color:#333;">0</div>
<div style="position:absolute;left:1127.7px;top:316.56px;transform:scaleX(0.96);transform-origin:0 0;font-size:10px;line-height:12px;white-space:nowrap;color:#333;">APARTADOS</div>
<div style="position:absolute;left:1210.7px;top:316.56px;transform:scaleX(0.96);transform-origin:0 0;font-size:10px;line-height:12px;white-space:nowrap;color:#333;">N</div>
<div style="position:absolute;left:1253px;top:316.56px;width:60.5px;text-align:right;transform:scaleX(0.96);transform-origin:100% 0;font-size:10px;line-height:12px;white-space:nowrap;color:#c8ccd0;">0.00</div>
<div style="position:absolute;left:1320px;top:316.56px;width:43.5px;text-align:right;transform:scaleX(0.96);transform-origin:100% 0;font-size:10px;line-height:12px;white-space:nowrap;color:#c8ccd0;">0</div>
<div style="position:absolute;left:1377.7px;top:316.56px;transform:scaleX(0.96);transform-origin:0 0;font-size:10px;line-height:12px;white-space:nowrap;color:#333;">11:38:41</div>
<div style="position:absolute;left:1429.7px;top:316.56px;transform:scaleX(0.96);transform-origin:0 0;font-size:10px;line-height:12px;white-space:nowrap;color:#333;">Salida por Apartado</div>
<div style="position:absolute;left:22px;top:334.41px;width:1531px;height:23.35px;background:#fff;"></div>
<div style="position:absolute;left:22px;top:356.76000000000005px;width:1531px;height:1px;background:#dee2e6;"></div>
<div style="position:absolute;left:51px;top:334.41px;width:35px;height:22.35px;background:#ff7b7b;"></div>
<div style="position:absolute;left:86px;top:334.41px;width:41px;height:22.35px;background:#ff7b7b;"></div>
<div style="position:absolute;left:127px;top:334.41px;width:108px;height:22.35px;background:#ff7b7b;"></div>
<div style="position:absolute;left:29px;top:337.47px;width:16px;height:16px;background:#fff;border:3px solid #d5d9dd;border-radius:2.5px;"></div>
<div style="position:absolute;left:51px;top:339.91px;width:28.5px;text-align:right;transform:scaleX(0.96);transform-origin:100% 0;font-size:10px;line-height:12px;white-space:nowrap;color:#333;">133</div>
<div style="position:absolute;left:93.7px;top:339.91px;transform:scaleX(0.96);transform-origin:0 0;font-size:10px;line-height:12px;white-space:nowrap;color:#333;">SPV</div>
<div style="position:absolute;left:134.7px;top:339.91px;transform:scaleX(0.96);transform-origin:0 0;font-size:10px;line-height:12px;white-space:nowrap;color:#333;">03/10/2025</div>
<div style="position:absolute;left:242.7px;top:339.91px;transform:scaleX(0.96);transform-origin:0 0;font-size:10px;line-height:12px;white-space:nowrap;color:#333;">Facturación : 11:32:35 - AUTOMOTRIZ EPASACORP SOCI</div>
<div style="position:absolute;left:509px;top:339.91px;width:76.5px;text-align:right;transform:scaleX(0.96);transform-origin:100% 0;font-size:10px;line-height:12px;white-space:nowrap;color:#333;">55511</div>
<div style="position:absolute;left:592px;top:339.91px;width:74.5px;text-align:right;transform:scaleX(0.96);transform-origin:100% 0;font-size:10px;line-height:12px;white-space:nowrap;color:#f00000;">-21,673.80</div>
<div style="position:absolute;left:673px;top:339.91px;width:54.5px;text-align:right;transform:scaleX(0.96);transform-origin:100% 0;font-size:10px;line-height:12px;white-space:nowrap;color:#333;">1</div>
<div style="position:absolute;left:741.7px;top:339.91px;transform:scaleX(0.96);transform-origin:0 0;font-size:10px;line-height:12px;white-space:nowrap;color:#333;">87379</div>
<div style="position:absolute;left:944.7px;top:339.91px;transform:scaleX(0.96);transform-origin:0 0;font-size:10px;line-height:12px;white-space:nowrap;color:#333;">072421AVANCOYWO</div>
<div style="position:absolute;left:1057.7px;top:339.91px;transform:scaleX(0.96);transform-origin:0 0;font-size:10px;line-height:12px;white-space:nowrap;color:#333;">0</div>
<div style="position:absolute;left:1127.7px;top:339.91px;transform:scaleX(0.96);transform-origin:0 0;font-size:10px;line-height:12px;white-space:nowrap;color:#333;">FACTURACION</div>
<div style="position:absolute;left:1210.7px;top:339.91px;transform:scaleX(0.96);transform-origin:0 0;font-size:10px;line-height:12px;white-space:nowrap;color:#333;">N</div>
<div style="position:absolute;left:1253px;top:339.91px;width:60.5px;text-align:right;transform:scaleX(0.96);transform-origin:100% 0;font-size:10px;line-height:12px;white-space:nowrap;color:#c8ccd0;">0.00</div>
<div style="position:absolute;left:1320px;top:339.91px;width:43.5px;text-align:right;transform:scaleX(0.96);transform-origin:100% 0;font-size:10px;line-height:12px;white-space:nowrap;color:#c8ccd0;">0</div>
<div style="position:absolute;left:1377.7px;top:339.91px;transform:scaleX(0.96);transform-origin:0 0;font-size:10px;line-height:12px;white-space:nowrap;color:#333;">11:32:44</div>
<div style="position:absolute;left:1429.7px;top:339.91px;transform:scaleX(0.96);transform-origin:0 0;font-size:10px;line-height:12px;white-space:nowrap;color:#333;">SALIDA POR VENTAS</div>
<div style="position:absolute;left:22px;top:357.76px;width:1531px;height:23.35px;background:#f4f6f9;"></div>
<div style="position:absolute;left:22px;top:380.11px;width:1531px;height:1px;background:#dee2e6;"></div>
<div style="position:absolute;left:51px;top:357.76px;width:35px;height:22.35px;background:#ff7b7b;"></div>
<div style="position:absolute;left:86px;top:357.76px;width:41px;height:22.35px;background:#ff7b7b;"></div>
<div style="position:absolute;left:127px;top:357.76px;width:108px;height:22.35px;background:#ff7b7b;"></div>
<div style="position:absolute;left:29px;top:360.82px;width:16px;height:16px;background:#fff;border:3px solid #d5d9dd;border-radius:2.5px;"></div>
<div style="position:absolute;left:51px;top:363.26px;width:28.5px;text-align:right;transform:scaleX(0.96);transform-origin:100% 0;font-size:10px;line-height:12px;white-space:nowrap;color:#333;">123</div>
<div style="position:absolute;left:93.7px;top:363.26px;transform:scaleX(0.96);transform-origin:0 0;font-size:10px;line-height:12px;white-space:nowrap;color:#333;">SPV</div>
<div style="position:absolute;left:134.7px;top:363.26px;transform:scaleX(0.96);transform-origin:0 0;font-size:10px;line-height:12px;white-space:nowrap;color:#333;">03/10/2025</div>
<div style="position:absolute;left:242.7px;top:363.26px;transform:scaleX(0.96);transform-origin:0 0;font-size:10px;line-height:12px;white-space:nowrap;color:#333;">Facturación : 11:21:14 - CASA NADDA TRESCIENTOS SE</div>
<div style="position:absolute;left:509px;top:363.26px;width:76.5px;text-align:right;transform:scaleX(0.96);transform-origin:100% 0;font-size:10px;line-height:12px;white-space:nowrap;color:#333;">55510</div>
<div style="position:absolute;left:592px;top:363.26px;width:74.5px;text-align:right;transform:scaleX(0.96);transform-origin:100% 0;font-size:10px;line-height:12px;white-space:nowrap;color:#f00000;">-22,919.95</div>
<div style="position:absolute;left:673px;top:363.26px;width:54.5px;text-align:right;transform:scaleX(0.96);transform-origin:100% 0;font-size:10px;line-height:12px;white-space:nowrap;color:#333;">1</div>
<div style="position:absolute;left:741.7px;top:363.26px;transform:scaleX(0.96);transform-origin:0 0;font-size:10px;line-height:12px;white-space:nowrap;color:#333;">87826</div>
<div style="position:absolute;left:944.7px;top:363.26px;transform:scaleX(0.96);transform-origin:0 0;font-size:10px;line-height:12px;white-space:nowrap;color:#333;">105608MRIVBEQJP</div>
<div style="position:absolute;left:1057.7px;top:363.26px;transform:scaleX(0.96);transform-origin:0 0;font-size:10px;line-height:12px;white-space:nowrap;color:#333;">0</div>
<div style="position:absolute;left:1127.7px;top:363.26px;transform:scaleX(0.96);transform-origin:0 0;font-size:10px;line-height:12px;white-space:nowrap;color:#333;">FACTURACION</div>
<div style="position:absolute;left:1210.7px;top:363.26px;transform:scaleX(0.96);transform-origin:0 0;font-size:10px;line-height:12px;white-space:nowrap;color:#333;">N</div>
<div style="position:absolute;left:1253px;top:363.26px;width:60.5px;text-align:right;transform:scaleX(0.96);transform-origin:100% 0;font-size:10px;line-height:12px;white-space:nowrap;color:#c8ccd0;">0.00</div>
<div style="position:absolute;left:1320px;top:363.26px;width:43.5px;text-align:right;transform:scaleX(0.96);transform-origin:100% 0;font-size:10px;line-height:12px;white-space:nowrap;color:#c8ccd0;">0</div>
<div style="position:absolute;left:1377.7px;top:363.26px;transform:scaleX(0.96);transform-origin:0 0;font-size:10px;line-height:12px;white-space:nowrap;color:#333;">11:21:34</div>
<div style="position:absolute;left:1429.7px;top:363.26px;transform:scaleX(0.96);transform-origin:0 0;font-size:10px;line-height:12px;white-space:nowrap;color:#333;">SALIDA POR VENTAS</div>
<div style="position:absolute;left:22px;top:381.11px;width:1531px;height:23.35px;background:#fff;"></div>
<div style="position:absolute;left:22px;top:403.46000000000004px;width:1531px;height:1px;background:#dee2e6;"></div>
<div style="position:absolute;left:51px;top:381.11px;width:35px;height:22.35px;background:#ff7b7b;"></div>
<div style="position:absolute;left:86px;top:381.11px;width:41px;height:22.35px;background:#ff7b7b;"></div>
<div style="position:absolute;left:127px;top:381.11px;width:108px;height:22.35px;background:#ff7b7b;"></div>
<div style="position:absolute;left:29px;top:384.17px;width:16px;height:16px;background:#fff;border:3px solid #d5d9dd;border-radius:2.5px;"></div>
<div style="position:absolute;left:51px;top:386.61px;width:28.5px;text-align:right;transform:scaleX(0.96);transform-origin:100% 0;font-size:10px;line-height:12px;white-space:nowrap;color:#333;">103</div>
<div style="position:absolute;left:93.7px;top:386.61px;transform:scaleX(0.96);transform-origin:0 0;font-size:10px;line-height:12px;white-space:nowrap;color:#333;">SPV</div>
<div style="position:absolute;left:134.7px;top:386.61px;transform:scaleX(0.96);transform-origin:0 0;font-size:10px;line-height:12px;white-space:nowrap;color:#333;">03/10/2025</div>
<div style="position:absolute;left:242.7px;top:386.61px;transform:scaleX(0.96);transform-origin:0 0;font-size:10px;line-height:12px;white-space:nowrap;color:#333;">Facturación : 10:50:24 - ANA JENSIE DIAZ ANGULO -</div>
<div style="position:absolute;left:509px;top:386.61px;width:76.5px;text-align:right;transform:scaleX(0.96);transform-origin:100% 0;font-size:10px;line-height:12px;white-space:nowrap;color:#333;">55509</div>
<div style="position:absolute;left:592px;top:386.61px;width:74.5px;text-align:right;transform:scaleX(0.96);transform-origin:100% 0;font-size:10px;line-height:12px;white-space:nowrap;color:#f00000;">-28,735.15</div>
<div style="position:absolute;left:673px;top:386.61px;width:54.5px;text-align:right;transform:scaleX(0.96);transform-origin:100% 0;font-size:10px;line-height:12px;white-space:nowrap;color:#333;">5</div>
<div style="position:absolute;left:741.7px;top:386.61px;transform:scaleX(0.96);transform-origin:0 0;font-size:10px;line-height:12px;white-space:nowrap;color:#333;">5435</div>
<div style="position:absolute;left:944.7px;top:386.61px;transform:scaleX(0.96);transform-origin:0 0;font-size:10px;line-height:12px;white-space:nowrap;color:#333;">104329MRIVJRMQS</div>
<div style="position:absolute;left:1057.7px;top:386.61px;transform:scaleX(0.96);transform-origin:0 0;font-size:10px;line-height:12px;white-space:nowrap;color:#333;">0</div>
<div style="position:absolute;left:1127.7px;top:386.61px;transform:scaleX(0.96);transform-origin:0 0;font-size:10px;line-height:12px;white-space:nowrap;color:#333;">FACTURACION</div>
<div style="position:absolute;left:1210.7px;top:386.61px;transform:scaleX(0.96);transform-origin:0 0;font-size:10px;line-height:12px;white-space:nowrap;color:#333;">N</div>
<div style="position:absolute;left:1253px;top:386.61px;width:60.5px;text-align:right;transform:scaleX(0.96);transform-origin:100% 0;font-size:10px;line-height:12px;white-space:nowrap;color:#c8ccd0;">0.00</div>
<div style="position:absolute;left:1320px;top:386.61px;width:43.5px;text-align:right;transform:scaleX(0.96);transform-origin:100% 0;font-size:10px;line-height:12px;white-space:nowrap;color:#c8ccd0;">0</div>
<div style="position:absolute;left:1377.7px;top:386.61px;transform:scaleX(0.96);transform-origin:0 0;font-size:10px;line-height:12px;white-space:nowrap;color:#333;">10:51:03</div>
<div style="position:absolute;left:1429.7px;top:386.61px;transform:scaleX(0.96);transform-origin:0 0;font-size:10px;line-height:12px;white-space:nowrap;color:#333;">SALIDA POR VENTAS</div>
<div style="position:absolute;left:22px;top:404.46px;width:1531px;height:23.35px;background:#f4f6f9;"></div>
<div style="position:absolute;left:22px;top:426.81px;width:1531px;height:1px;background:#dee2e6;"></div>
<div style="position:absolute;left:51px;top:404.46px;width:35px;height:22.35px;background:#ff7b7b;"></div>
<div style="position:absolute;left:86px;top:404.46px;width:41px;height:22.35px;background:#ff7b7b;"></div>
<div style="position:absolute;left:127px;top:404.46px;width:108px;height:22.35px;background:#ff7b7b;"></div>
<div style="position:absolute;left:29px;top:407.52px;width:16px;height:16px;background:#fff;border:3px solid #d5d9dd;border-radius:2.5px;"></div>
<div style="position:absolute;left:51px;top:409.96px;width:28.5px;text-align:right;transform:scaleX(0.96);transform-origin:100% 0;font-size:10px;line-height:12px;white-space:nowrap;color:#333;">92</div>
<div style="position:absolute;left:93.7px;top:409.96px;transform:scaleX(0.96);transform-origin:0 0;font-size:10px;line-height:12px;white-space:nowrap;color:#333;">SPV</div>
<div style="position:absolute;left:134.7px;top:409.96px;transform:scaleX(0.96);transform-origin:0 0;font-size:10px;line-height:12px;white-space:nowrap;color:#333;">03/10/2025</div>
<div style="position:absolute;left:242.7px;top:409.96px;transform:scaleX(0.96);transform-origin:0 0;font-size:10px;line-height:12px;white-space:nowrap;color:#333;">Facturación : 10:40:50 - PAUL ANDRES ROJAS SALAZAR</div>
<div style="position:absolute;left:509px;top:409.96px;width:76.5px;text-align:right;transform:scaleX(0.96);transform-origin:100% 0;font-size:10px;line-height:12px;white-space:nowrap;color:#333;">55508</div>
<div style="position:absolute;left:592px;top:409.96px;width:74.5px;text-align:right;transform:scaleX(0.96);transform-origin:100% 0;font-size:10px;line-height:12px;white-space:nowrap;color:#f00000;">-62,434.36</div>
<div style="position:absolute;left:673px;top:409.96px;width:54.5px;text-align:right;transform:scaleX(0.96);transform-origin:100% 0;font-size:10px;line-height:12px;white-space:nowrap;color:#333;">4</div>
<div style="position:absolute;left:741.7px;top:409.96px;transform:scaleX(0.96);transform-origin:0 0;font-size:10px;line-height:12px;white-space:nowrap;color:#333;">93610</div>
<div style="position:absolute;left:944.7px;top:409.96px;transform:scaleX(0.96);transform-origin:0 0;font-size:10px;line-height:12px;white-space:nowrap;color:#333;">072421AVANCOYWO</div>
<div style="position:absolute;left:1057.7px;top:409.96px;transform:scaleX(0.96);transform-origin:0 0;font-size:10px;line-height:12px;white-space:nowrap;color:#333;">0</div>
<div style="position:absolute;left:1127.7px;top:409.96px;transform:scaleX(0.96);transform-origin:0 0;font-size:10px;line-height:12px;white-space:nowrap;color:#333;">FACTURACION</div>
<div style="position:absolute;left:1210.7px;top:409.96px;transform:scaleX(0.96);transform-origin:0 0;font-size:10px;line-height:12px;white-space:nowrap;color:#333;">N</div>
<div style="position:absolute;left:1253px;top:409.96px;width:60.5px;text-align:right;transform:scaleX(0.96);transform-origin:100% 0;font-size:10px;line-height:12px;white-space:nowrap;color:#c8ccd0;">0.00</div>
<div style="position:absolute;left:1320px;top:409.96px;width:43.5px;text-align:right;transform:scaleX(0.96);transform-origin:100% 0;font-size:10px;line-height:12px;white-space:nowrap;color:#c8ccd0;">0</div>
<div style="position:absolute;left:1377.7px;top:409.96px;transform:scaleX(0.96);transform-origin:0 0;font-size:10px;line-height:12px;white-space:nowrap;color:#333;">10:41:00</div>
<div style="position:absolute;left:1429.7px;top:409.96px;transform:scaleX(0.96);transform-origin:0 0;font-size:10px;line-height:12px;white-space:nowrap;color:#333;">SALIDA POR VENTAS</div>
<div style="position:absolute;left:22px;top:427.81px;width:1531px;height:23.35px;background:#fff;"></div>
<div style="position:absolute;left:22px;top:450.16px;width:1531px;height:1px;background:#dee2e6;"></div>
<div style="position:absolute;left:51px;top:427.81px;width:35px;height:22.35px;background:#ff7b7b;"></div>
<div style="position:absolute;left:86px;top:427.81px;width:41px;height:22.35px;background:#ff7b7b;"></div>
<div style="position:absolute;left:127px;top:427.81px;width:108px;height:22.35px;background:#ff7b7b;"></div>
<div style="position:absolute;left:29px;top:430.87px;width:16px;height:16px;background:#fff;border:3px solid #d5d9dd;border-radius:2.5px;"></div>
<div style="position:absolute;left:51px;top:433.31px;width:28.5px;text-align:right;transform:scaleX(0.96);transform-origin:100% 0;font-size:10px;line-height:12px;white-space:nowrap;color:#333;">78</div>
<div style="position:absolute;left:93.7px;top:433.31px;transform:scaleX(0.96);transform-origin:0 0;font-size:10px;line-height:12px;white-space:nowrap;color:#333;">SPV</div>
<div style="position:absolute;left:134.7px;top:433.31px;transform:scaleX(0.96);transform-origin:0 0;font-size:10px;line-height:12px;white-space:nowrap;color:#333;">03/10/2025</div>
<div style="position:absolute;left:242.7px;top:433.31px;transform:scaleX(0.96);transform-origin:0 0;font-size:10px;line-height:12px;white-space:nowrap;color:#333;">Facturación : 10:18:14 - MINOR JESUS ARRIETA ROJAS</div>
<div style="position:absolute;left:509px;top:433.31px;width:76.5px;text-align:right;transform:scaleX(0.96);transform-origin:100% 0;font-size:10px;line-height:12px;white-space:nowrap;color:#333;">55507</div>
<div style="position:absolute;left:592px;top:433.31px;width:74.5px;text-align:right;transform:scaleX(0.96);transform-origin:100% 0;font-size:10px;line-height:12px;white-space:nowrap;color:#f00000;">-143,971.86</div>
<div style="position:absolute;left:673px;top:433.31px;width:54.5px;text-align:right;transform:scaleX(0.96);transform-origin:100% 0;font-size:10px;line-height:12px;white-space:nowrap;color:#333;">4</div>
<div style="position:absolute;left:741.7px;top:433.31px;transform:scaleX(0.96);transform-origin:0 0;font-size:10px;line-height:12px;white-space:nowrap;color:#333;">62659</div>
<div style="position:absolute;left:944.7px;top:433.31px;transform:scaleX(0.96);transform-origin:0 0;font-size:10px;line-height:12px;white-space:nowrap;color:#333;">072421AVANCOYWO</div>
<div style="position:absolute;left:1057.7px;top:433.31px;transform:scaleX(0.96);transform-origin:0 0;font-size:10px;line-height:12px;white-space:nowrap;color:#333;">0</div>
<div style="position:absolute;left:1127.7px;top:433.31px;transform:scaleX(0.96);transform-origin:0 0;font-size:10px;line-height:12px;white-space:nowrap;color:#333;">FACTURACION</div>
<div style="position:absolute;left:1210.7px;top:433.31px;transform:scaleX(0.96);transform-origin:0 0;font-size:10px;line-height:12px;white-space:nowrap;color:#333;">N</div>
<div style="position:absolute;left:1253px;top:433.31px;width:60.5px;text-align:right;transform:scaleX(0.96);transform-origin:100% 0;font-size:10px;line-height:12px;white-space:nowrap;color:#c8ccd0;">0.00</div>
<div style="position:absolute;left:1320px;top:433.31px;width:43.5px;text-align:right;transform:scaleX(0.96);transform-origin:100% 0;font-size:10px;line-height:12px;white-space:nowrap;color:#c8ccd0;">0</div>
<div style="position:absolute;left:1377.7px;top:433.31px;transform:scaleX(0.96);transform-origin:0 0;font-size:10px;line-height:12px;white-space:nowrap;color:#333;">10:18:27</div>
<div style="position:absolute;left:1429.7px;top:433.31px;transform:scaleX(0.96);transform-origin:0 0;font-size:10px;line-height:12px;white-space:nowrap;color:#333;">SALIDA POR VENTAS</div>
<div style="position:absolute;left:22px;top:451.16px;width:1531px;height:23.35px;background:#f4f6f9;"></div>
<div style="position:absolute;left:22px;top:473.51000000000005px;width:1531px;height:1px;background:#dee2e6;"></div>
<div style="position:absolute;left:51px;top:451.16px;width:35px;height:22.35px;background:#a486ff;"></div>
<div style="position:absolute;left:86px;top:451.16px;width:41px;height:22.35px;background:#a486ff;"></div>
<div style="position:absolute;left:127px;top:451.16px;width:108px;height:22.35px;background:#a486ff;"></div>
<div style="position:absolute;left:29px;top:454.22px;width:16px;height:16px;background:#fff;border:3px solid #d5d9dd;border-radius:2.5px;"></div>
<div style="position:absolute;left:51px;top:456.66px;width:28.5px;text-align:right;transform:scaleX(0.96);transform-origin:100% 0;font-size:10px;line-height:12px;white-space:nowrap;color:#333;">60</div>
<div style="position:absolute;left:93.7px;top:456.66px;transform:scaleX(0.96);transform-origin:0 0;font-size:10px;line-height:12px;white-space:nowrap;color:#333;">EPC</div>
<div style="position:absolute;left:134.7px;top:456.66px;transform:scaleX(0.96);transform-origin:0 0;font-size:10px;line-height:12px;white-space:nowrap;color:#333;">03/10/2025</div>
<div style="position:absolute;left:242.7px;top:456.66px;transform:scaleX(0.96);transform-origin:0 0;font-size:10px;line-height:12px;white-space:nowrap;color:#333;">SOLICITA MARCIA</div>
<div style="position:absolute;left:509px;top:456.66px;width:76.5px;text-align:right;transform:scaleX(0.96);transform-origin:100% 0;font-size:10px;line-height:12px;white-space:nowrap;color:#333;">74584</div>
<div style="position:absolute;left:592px;top:456.66px;width:74.5px;text-align:right;transform:scaleX(0.96);transform-origin:100% 0;font-size:10px;line-height:12px;white-space:nowrap;color:#1c1cc8;">1,110,032.00</div>
<div style="position:absolute;left:673px;top:456.66px;width:54.5px;text-align:right;transform:scaleX(0.96);transform-origin:100% 0;font-size:10px;line-height:12px;white-space:nowrap;color:#333;">3</div>
<div style="position:absolute;left:741.7px;top:456.66px;transform:scaleX(0.96);transform-origin:0 0;font-size:10px;line-height:12px;white-space:nowrap;color:#333;">0</div>
<div style="position:absolute;left:796.7px;top:456.66px;transform:scaleX(0.96);transform-origin:0 0;font-size:10px;line-height:12px;white-space:nowrap;color:#333;">0056</div>
<div style="position:absolute;left:944.7px;top:456.66px;transform:scaleX(0.96);transform-origin:0 0;font-size:10px;line-height:12px;white-space:nowrap;color:#333;">PCEXPOCOMPRAS</div>
<div style="position:absolute;left:1057.7px;top:456.66px;transform:scaleX(0.96);transform-origin:0 0;font-size:10px;line-height:12px;white-space:nowrap;color:#333;">30607</div>
<div style="position:absolute;left:1127.7px;top:456.66px;transform:scaleX(0.96);transform-origin:0 0;font-size:10px;line-height:12px;white-space:nowrap;color:#333;">CXP</div>
<div style="position:absolute;left:1210.7px;top:456.66px;transform:scaleX(0.96);transform-origin:0 0;font-size:10px;line-height:12px;white-space:nowrap;color:#333;">N</div>
<div style="position:absolute;left:1253px;top:456.66px;width:60.5px;text-align:right;transform:scaleX(0.96);transform-origin:100% 0;font-size:10px;line-height:12px;white-space:nowrap;color:#c8ccd0;">0.00</div>
<div style="position:absolute;left:1320px;top:456.66px;width:43.5px;text-align:right;transform:scaleX(0.96);transform-origin:100% 0;font-size:10px;line-height:12px;white-space:nowrap;color:#c8ccd0;">0</div>
<div style="position:absolute;left:1377.7px;top:456.66px;transform:scaleX(0.96);transform-origin:0 0;font-size:10px;line-height:12px;white-space:nowrap;color:#333;">09:50:45</div>
<div style="position:absolute;left:1429.7px;top:456.66px;transform:scaleX(0.96);transform-origin:0 0;font-size:10px;line-height:12px;white-space:nowrap;color:#333;">ENTRADA POR COMPRA</div>
<div style="position:absolute;left:22px;top:474.51px;width:1531px;height:23.35px;background:#fff;"></div>
<div style="position:absolute;left:22px;top:496.86px;width:1531px;height:1px;background:#dee2e6;"></div>
<div style="position:absolute;left:51px;top:474.51px;width:35px;height:22.35px;background:#a486ff;"></div>
<div style="position:absolute;left:86px;top:474.51px;width:41px;height:22.35px;background:#a486ff;"></div>
<div style="position:absolute;left:127px;top:474.51px;width:108px;height:22.35px;background:#a486ff;"></div>
<div style="position:absolute;left:29px;top:477.57px;width:16px;height:16px;background:#fff;border:3px solid #d5d9dd;border-radius:2.5px;"></div>
<div style="position:absolute;left:51px;top:480.01px;width:28.5px;text-align:right;transform:scaleX(0.96);transform-origin:100% 0;font-size:10px;line-height:12px;white-space:nowrap;color:#333;">59</div>
<div style="position:absolute;left:93.7px;top:480.01px;transform:scaleX(0.96);transform-origin:0 0;font-size:10px;line-height:12px;white-space:nowrap;color:#333;">EPC</div>
<div style="position:absolute;left:134.7px;top:480.01px;transform:scaleX(0.96);transform-origin:0 0;font-size:10px;line-height:12px;white-space:nowrap;color:#333;">03/10/2025</div>
<div style="position:absolute;left:242.7px;top:480.01px;transform:scaleX(0.96);transform-origin:0 0;font-size:10px;line-height:12px;white-space:nowrap;color:#333;">SOLICITA MARCIA</div>
<div style="position:absolute;left:509px;top:480.01px;width:76.5px;text-align:right;transform:scaleX(0.96);transform-origin:100% 0;font-size:10px;line-height:12px;white-space:nowrap;color:#333;">74507</div>
<div style="position:absolute;left:592px;top:480.01px;width:74.5px;text-align:right;transform:scaleX(0.96);transform-origin:100% 0;font-size:10px;line-height:12px;white-space:nowrap;color:#1c1cc8;">672,960.70</div>
<div style="position:absolute;left:673px;top:480.01px;width:54.5px;text-align:right;transform:scaleX(0.96);transform-origin:100% 0;font-size:10px;line-height:12px;white-space:nowrap;color:#333;">8</div>
<div style="position:absolute;left:741.7px;top:480.01px;transform:scaleX(0.96);transform-origin:0 0;font-size:10px;line-height:12px;white-space:nowrap;color:#333;">0</div>
<div style="position:absolute;left:796.7px;top:480.01px;transform:scaleX(0.96);transform-origin:0 0;font-size:10px;line-height:12px;white-space:nowrap;color:#333;">0056</div>
<div style="position:absolute;left:944.7px;top:480.01px;transform:scaleX(0.96);transform-origin:0 0;font-size:10px;line-height:12px;white-space:nowrap;color:#333;">PCEXPOCOMPRAS</div>
<div style="position:absolute;left:1057.7px;top:480.01px;transform:scaleX(0.96);transform-origin:0 0;font-size:10px;line-height:12px;white-space:nowrap;color:#333;">30552</div>
<div style="position:absolute;left:1127.7px;top:480.01px;transform:scaleX(0.96);transform-origin:0 0;font-size:10px;line-height:12px;white-space:nowrap;color:#333;">CXP</div>
<div style="position:absolute;left:1210.7px;top:480.01px;transform:scaleX(0.96);transform-origin:0 0;font-size:10px;line-height:12px;white-space:nowrap;color:#333;">N</div>
<div style="position:absolute;left:1253px;top:480.01px;width:60.5px;text-align:right;transform:scaleX(0.96);transform-origin:100% 0;font-size:10px;line-height:12px;white-space:nowrap;color:#c8ccd0;">0.00</div>
<div style="position:absolute;left:1320px;top:480.01px;width:43.5px;text-align:right;transform:scaleX(0.96);transform-origin:100% 0;font-size:10px;line-height:12px;white-space:nowrap;color:#c8ccd0;">0</div>
<div style="position:absolute;left:1377.7px;top:480.01px;transform:scaleX(0.96);transform-origin:0 0;font-size:10px;line-height:12px;white-space:nowrap;color:#333;">09:49:26</div>
<div style="position:absolute;left:1429.7px;top:480.01px;transform:scaleX(0.96);transform-origin:0 0;font-size:10px;line-height:12px;white-space:nowrap;color:#333;">ENTRADA POR COMPRA</div>
<div style="position:absolute;left:22px;top:497.86px;width:1531px;height:23.35px;background:#f4f6f9;"></div>
<div style="position:absolute;left:22px;top:520.21px;width:1531px;height:1px;background:#dee2e6;"></div>
<div style="position:absolute;left:51px;top:497.86px;width:35px;height:22.35px;background:#ff7b7b;"></div>
<div style="position:absolute;left:86px;top:497.86px;width:41px;height:22.35px;background:#ff7b7b;"></div>
<div style="position:absolute;left:127px;top:497.86px;width:108px;height:22.35px;background:#ff7b7b;"></div>
<div style="position:absolute;left:29px;top:500.92px;width:16px;height:16px;background:#fff;border:3px solid #d5d9dd;border-radius:2.5px;"></div>
<div style="position:absolute;left:51px;top:503.36px;width:28.5px;text-align:right;transform:scaleX(0.96);transform-origin:100% 0;font-size:10px;line-height:12px;white-space:nowrap;color:#333;">58</div>
<div style="position:absolute;left:93.7px;top:503.36px;transform:scaleX(0.96);transform-origin:0 0;font-size:10px;line-height:12px;white-space:nowrap;color:#333;">SPV</div>
<div style="position:absolute;left:134.7px;top:503.36px;transform:scaleX(0.96);transform-origin:0 0;font-size:10px;line-height:12px;white-space:nowrap;color:#333;">03/10/2025</div>
<div style="position:absolute;left:242.7px;top:503.36px;transform:scaleX(0.96);transform-origin:0 0;font-size:10px;line-height:12px;white-space:nowrap;color:#333;">Facturación : 09:47:45 - CARMEN MAURILIA BETANCU A</div>
<div style="position:absolute;left:509px;top:503.36px;width:76.5px;text-align:right;transform:scaleX(0.96);transform-origin:100% 0;font-size:10px;line-height:12px;white-space:nowrap;color:#333;">55506</div>
<div style="position:absolute;left:592px;top:503.36px;width:74.5px;text-align:right;transform:scaleX(0.96);transform-origin:100% 0;font-size:10px;line-height:12px;white-space:nowrap;color:#f00000;">-43,228.19</div>
<div style="position:absolute;left:673px;top:503.36px;width:54.5px;text-align:right;transform:scaleX(0.96);transform-origin:100% 0;font-size:10px;line-height:12px;white-space:nowrap;color:#333;">1</div>
<div style="position:absolute;left:741.7px;top:503.36px;transform:scaleX(0.96);transform-origin:0 0;font-size:10px;line-height:12px;white-space:nowrap;color:#333;">102215</div>
<div style="position:absolute;left:944.7px;top:503.36px;transform:scaleX(0.96);transform-origin:0 0;font-size:10px;line-height:12px;white-space:nowrap;color:#333;">092411MMORLLIRP</div>
<div style="position:absolute;left:1057.7px;top:503.36px;transform:scaleX(0.96);transform-origin:0 0;font-size:10px;line-height:12px;white-space:nowrap;color:#333;">0</div>
<div style="position:absolute;left:1127.7px;top:503.36px;transform:scaleX(0.96);transform-origin:0 0;font-size:10px;line-height:12px;white-space:nowrap;color:#333;">FACTURACION</div>
<div style="position:absolute;left:1210.7px;top:503.36px;transform:scaleX(0.96);transform-origin:0 0;font-size:10px;line-height:12px;white-space:nowrap;color:#333;">N</div>
<div style="position:absolute;left:1253px;top:503.36px;width:60.5px;text-align:right;transform:scaleX(0.96);transform-origin:100% 0;font-size:10px;line-height:12px;white-space:nowrap;color:#c8ccd0;">0.00</div>
<div style="position:absolute;left:1320px;top:503.36px;width:43.5px;text-align:right;transform:scaleX(0.96);transform-origin:100% 0;font-size:10px;line-height:12px;white-space:nowrap;color:#c8ccd0;">0</div>
<div style="position:absolute;left:1377.7px;top:503.36px;transform:scaleX(0.96);transform-origin:0 0;font-size:10px;line-height:12px;white-space:nowrap;color:#333;">09:47:51</div>
<div style="position:absolute;left:1429.7px;top:503.36px;transform:scaleX(0.96);transform-origin:0 0;font-size:10px;line-height:12px;white-space:nowrap;color:#333;">SALIDA POR VENTAS</div>
<div style="position:absolute;left:22px;top:521.21px;width:1531px;height:23.35px;background:#fff;"></div>
<div style="position:absolute;left:22px;top:543.5600000000001px;width:1531px;height:1px;background:#dee2e6;"></div>
<div style="position:absolute;left:51px;top:521.21px;width:35px;height:22.35px;background:#ff7b7b;"></div>
<div style="position:absolute;left:86px;top:521.21px;width:41px;height:22.35px;background:#ff7b7b;"></div>
<div style="position:absolute;left:127px;top:521.21px;width:108px;height:22.35px;background:#ff7b7b;"></div>
<div style="position:absolute;left:29px;top:524.27px;width:16px;height:16px;background:#fff;border:3px solid #d5d9dd;border-radius:2.5px;"></div>
<div style="position:absolute;left:51px;top:526.71px;width:28.5px;text-align:right;transform:scaleX(0.96);transform-origin:100% 0;font-size:10px;line-height:12px;white-space:nowrap;color:#333;">57</div>
<div style="position:absolute;left:93.7px;top:526.71px;transform:scaleX(0.96);transform-origin:0 0;font-size:10px;line-height:12px;white-space:nowrap;color:#333;">SPV</div>
<div style="position:absolute;left:134.7px;top:526.71px;transform:scaleX(0.96);transform-origin:0 0;font-size:10px;line-height:12px;white-space:nowrap;color:#333;">03/10/2025</div>
<div style="position:absolute;left:242.7px;top:526.71px;transform:scaleX(0.96);transform-origin:0 0;font-size:10px;line-height:12px;white-space:nowrap;color:#333;">Facturación : 09:43:25 - MARGOT RODRIGUEZ RODRIGUE</div>
<div style="position:absolute;left:509px;top:526.71px;width:76.5px;text-align:right;transform:scaleX(0.96);transform-origin:100% 0;font-size:10px;line-height:12px;white-space:nowrap;color:#333;">55505</div>
<div style="position:absolute;left:592px;top:526.71px;width:74.5px;text-align:right;transform:scaleX(0.96);transform-origin:100% 0;font-size:10px;line-height:12px;white-space:nowrap;color:#f00000;">-31,613.14</div>
<div style="position:absolute;left:673px;top:526.71px;width:54.5px;text-align:right;transform:scaleX(0.96);transform-origin:100% 0;font-size:10px;line-height:12px;white-space:nowrap;color:#333;">1</div>
<div style="position:absolute;left:741.7px;top:526.71px;transform:scaleX(0.96);transform-origin:0 0;font-size:10px;line-height:12px;white-space:nowrap;color:#333;">102214</div>
<div style="position:absolute;left:944.7px;top:526.71px;transform:scaleX(0.96);transform-origin:0 0;font-size:10px;line-height:12px;white-space:nowrap;color:#333;">072421AVANCOYWO</div>
<div style="position:absolute;left:1057.7px;top:526.71px;transform:scaleX(0.96);transform-origin:0 0;font-size:10px;line-height:12px;white-space:nowrap;color:#333;">0</div>
<div style="position:absolute;left:1127.7px;top:526.71px;transform:scaleX(0.96);transform-origin:0 0;font-size:10px;line-height:12px;white-space:nowrap;color:#333;">FACTURACION</div>
<div style="position:absolute;left:1210.7px;top:526.71px;transform:scaleX(0.96);transform-origin:0 0;font-size:10px;line-height:12px;white-space:nowrap;color:#333;">N</div>
<div style="position:absolute;left:1253px;top:526.71px;width:60.5px;text-align:right;transform:scaleX(0.96);transform-origin:100% 0;font-size:10px;line-height:12px;white-space:nowrap;color:#c8ccd0;">0.00</div>
<div style="position:absolute;left:1320px;top:526.71px;width:43.5px;text-align:right;transform:scaleX(0.96);transform-origin:100% 0;font-size:10px;line-height:12px;white-space:nowrap;color:#c8ccd0;">0</div>
<div style="position:absolute;left:1377.7px;top:526.71px;transform:scaleX(0.96);transform-origin:0 0;font-size:10px;line-height:12px;white-space:nowrap;color:#333;">09:43:34</div>
<div style="position:absolute;left:1429.7px;top:526.71px;transform:scaleX(0.96);transform-origin:0 0;font-size:10px;line-height:12px;white-space:nowrap;color:#333;">SALIDA POR VENTAS</div>
<div style="position:absolute;left:22px;top:544.56px;width:1531px;height:23.35px;background:#f4f6f9;"></div>
<div style="position:absolute;left:22px;top:566.91px;width:1531px;height:1px;background:#dee2e6;"></div>
<div style="position:absolute;left:51px;top:544.56px;width:35px;height:22.35px;background:#ff7b7b;"></div>
<div style="position:absolute;left:86px;top:544.56px;width:41px;height:22.35px;background:#ff7b7b;"></div>
<div style="position:absolute;left:127px;top:544.56px;width:108px;height:22.35px;background:#ff7b7b;"></div>
<div style="position:absolute;left:29px;top:547.6199999999999px;width:16px;height:16px;background:#fff;border:3px solid #d5d9dd;border-radius:2.5px;"></div>
<div style="position:absolute;left:51px;top:550.06px;width:28.5px;text-align:right;transform:scaleX(0.96);transform-origin:100% 0;font-size:10px;line-height:12px;white-space:nowrap;color:#333;">51</div>
<div style="position:absolute;left:93.7px;top:550.06px;transform:scaleX(0.96);transform-origin:0 0;font-size:10px;line-height:12px;white-space:nowrap;color:#333;">SPV</div>
<div style="position:absolute;left:134.7px;top:550.06px;transform:scaleX(0.96);transform-origin:0 0;font-size:10px;line-height:12px;white-space:nowrap;color:#333;">03/10/2025</div>
<div style="position:absolute;left:242.7px;top:550.06px;transform:scaleX(0.96);transform-origin:0 0;font-size:10px;line-height:12px;white-space:nowrap;color:#333;">Facturación : 09:31:00 - HELYN GUEVARA SAENZ - 832</div>
<div style="position:absolute;left:509px;top:550.06px;width:76.5px;text-align:right;transform:scaleX(0.96);transform-origin:100% 0;font-size:10px;line-height:12px;white-space:nowrap;color:#333;">55504</div>
<div style="position:absolute;left:592px;top:550.06px;width:74.5px;text-align:right;transform:scaleX(0.96);transform-origin:100% 0;font-size:10px;line-height:12px;white-space:nowrap;color:#f00000;">-21,088.86</div>
<div style="position:absolute;left:673px;top:550.06px;width:54.5px;text-align:right;transform:scaleX(0.96);transform-origin:100% 0;font-size:10px;line-height:12px;white-space:nowrap;color:#333;">2</div>
<div style="position:absolute;left:741.7px;top:550.06px;transform:scaleX(0.96);transform-origin:0 0;font-size:10px;line-height:12px;white-space:nowrap;color:#333;">83559</div>
<div style="position:absolute;left:944.7px;top:550.06px;transform:scaleX(0.96);transform-origin:0 0;font-size:10px;line-height:12px;white-space:nowrap;color:#333;">072421AVANCOYWO</div>
<div style="position:absolute;left:1057.7px;top:550.06px;transform:scaleX(0.96);transform-origin:0 0;font-size:10px;line-height:12px;white-space:nowrap;color:#333;">0</div>
<div style="position:absolute;left:1127.7px;top:550.06px;transform:scaleX(0.96);transform-origin:0 0;font-size:10px;line-height:12px;white-space:nowrap;color:#333;">FACTURACION</div>
<div style="position:absolute;left:1210.7px;top:550.06px;transform:scaleX(0.96);transform-origin:0 0;font-size:10px;line-height:12px;white-space:nowrap;color:#333;">N</div>
<div style="position:absolute;left:1253px;top:550.06px;width:60.5px;text-align:right;transform:scaleX(0.96);transform-origin:100% 0;font-size:10px;line-height:12px;white-space:nowrap;color:#c8ccd0;">0.00</div>
<div style="position:absolute;left:1320px;top:550.06px;width:43.5px;text-align:right;transform:scaleX(0.96);transform-origin:100% 0;font-size:10px;line-height:12px;white-space:nowrap;color:#c8ccd0;">0</div>
<div style="position:absolute;left:1377.7px;top:550.06px;transform:scaleX(0.96);transform-origin:0 0;font-size:10px;line-height:12px;white-space:nowrap;color:#333;">09:31:16</div>
<div style="position:absolute;left:1429.7px;top:550.06px;transform:scaleX(0.96);transform-origin:0 0;font-size:10px;line-height:12px;white-space:nowrap;color:#333;">SALIDA POR VENTAS</div>
<div style="position:absolute;left:22px;top:567.91px;width:1531px;height:23.35px;background:#fff;"></div>
<div style="position:absolute;left:51px;top:567.91px;width:35px;height:22.35px;background:#ff7b7b;"></div>
<div style="position:absolute;left:86px;top:567.91px;width:41px;height:22.35px;background:#ff7b7b;"></div>
<div style="position:absolute;left:127px;top:567.91px;width:108px;height:22.35px;background:#ff7b7b;"></div>
<div style="position:absolute;left:29px;top:570.9699999999999px;width:16px;height:16px;background:#fff;border:3px solid #d5d9dd;border-radius:2.5px;"></div>
<div style="position:absolute;left:51px;top:573.41px;width:28.5px;text-align:right;transform:scaleX(0.96);transform-origin:100% 0;font-size:10px;line-height:12px;white-space:nowrap;color:#333;">47</div>
<div style="position:absolute;left:93.7px;top:573.41px;transform:scaleX(0.96);transform-origin:0 0;font-size:10px;line-height:12px;white-space:nowrap;color:#333;">SPV</div>
<div style="position:absolute;left:134.7px;top:573.41px;transform:scaleX(0.96);transform-origin:0 0;font-size:10px;line-height:12px;white-space:nowrap;color:#333;">03/10/2025</div>
<div style="position:absolute;left:242.7px;top:573.41px;transform:scaleX(0.96);transform-origin:0 0;font-size:10px;line-height:12px;white-space:nowrap;color:#333;">Facturación : 09:25:55 - INFOTECH SOCIEDAD ANONIMA</div>
<div style="position:absolute;left:509px;top:573.41px;width:76.5px;text-align:right;transform:scaleX(0.96);transform-origin:100% 0;font-size:10px;line-height:12px;white-space:nowrap;color:#333;">55503</div>
<div style="position:absolute;left:592px;top:573.41px;width:74.5px;text-align:right;transform:scaleX(0.96);transform-origin:100% 0;font-size:10px;line-height:12px;white-space:nowrap;color:#f00000;">-22,265.43</div>
<div style="position:absolute;left:673px;top:573.41px;width:54.5px;text-align:right;transform:scaleX(0.96);transform-origin:100% 0;font-size:10px;line-height:12px;white-space:nowrap;color:#333;">1</div>
<div style="position:absolute;left:741.7px;top:573.41px;transform:scaleX(0.96);transform-origin:0 0;font-size:10px;line-height:12px;white-space:nowrap;color:#333;">102203</div>
<div style="position:absolute;left:944.7px;top:573.41px;transform:scaleX(0.96);transform-origin:0 0;font-size:10px;line-height:12px;white-space:nowrap;color:#333;">092436MMORKWQVG</div>
<div style="position:absolute;left:1057.7px;top:573.41px;transform:scaleX(0.96);transform-origin:0 0;font-size:10px;line-height:12px;white-space:nowrap;color:#333;">0</div>
<div style="position:absolute;left:1127.7px;top:573.41px;transform:scaleX(0.96);transform-origin:0 0;font-size:10px;line-height:12px;white-space:nowrap;color:#333;">FACTURACION</div>
<div style="position:absolute;left:1210.7px;top:573.41px;transform:scaleX(0.96);transform-origin:0 0;font-size:10px;line-height:12px;white-space:nowrap;color:#333;">N</div>
<div style="position:absolute;left:1253px;top:573.41px;width:60.5px;text-align:right;transform:scaleX(0.96);transform-origin:100% 0;font-size:10px;line-height:12px;white-space:nowrap;color:#c8ccd0;">0.00</div>
<div style="position:absolute;left:1320px;top:573.41px;width:43.5px;text-align:right;transform:scaleX(0.96);transform-origin:100% 0;font-size:10px;line-height:12px;white-space:nowrap;color:#c8ccd0;">0</div>
<div style="position:absolute;left:1377.7px;top:573.41px;transform:scaleX(0.96);transform-origin:0 0;font-size:10px;line-height:12px;white-space:nowrap;color:#333;">09:26:02</div>
<div style="position:absolute;left:1429.7px;top:573.41px;transform:scaleX(0.96);transform-origin:0 0;font-size:10px;line-height:12px;white-space:nowrap;color:#333;">SALIDA POR VENTAS</div>
<div style="position:absolute;left:51px;top:241px;width:1px;height:349.25px;background:#dee2e6;"></div>
<div style="position:absolute;left:86px;top:241px;width:1px;height:349.25px;background:#dee2e6;"></div>
<div style="position:absolute;left:127px;top:241px;width:1px;height:349.25px;background:#dee2e6;"></div>
<div style="position:absolute;left:235px;top:241px;width:1px;height:349.25px;background:#dee2e6;"></div>
<div style="position:absolute;left:509px;top:241px;width:1px;height:349.25px;background:#dee2e6;"></div>
<div style="position:absolute;left:592px;top:241px;width:1px;height:349.25px;background:#dee2e6;"></div>
<div style="position:absolute;left:673px;top:241px;width:1px;height:349.25px;background:#dee2e6;"></div>
<div style="position:absolute;left:734px;top:241px;width:1px;height:349.25px;background:#dee2e6;"></div>
<div style="position:absolute;left:789px;top:241px;width:1px;height:349.25px;background:#dee2e6;"></div>
<div style="position:absolute;left:860px;top:241px;width:1px;height:349.25px;background:#dee2e6;"></div>
<div style="position:absolute;left:937px;top:241px;width:1px;height:349.25px;background:#dee2e6;"></div>
<div style="position:absolute;left:1050px;top:241px;width:1px;height:349.25px;background:#dee2e6;"></div>
<div style="position:absolute;left:1120px;top:241px;width:1px;height:349.25px;background:#dee2e6;"></div>
<div style="position:absolute;left:1203px;top:241px;width:1px;height:349.25px;background:#dee2e6;"></div>
<div style="position:absolute;left:1253px;top:241px;width:1px;height:349.25px;background:#dee2e6;"></div>
<div style="position:absolute;left:1320px;top:241px;width:1px;height:349.25px;background:#dee2e6;"></div>
<div style="position:absolute;left:1370px;top:241px;width:1px;height:349.25px;background:#dee2e6;"></div>
<div style="position:absolute;left:1422px;top:241px;width:1px;height:349.25px;background:#dee2e6;"></div>
<div style="position:absolute;left:1549px;top:241px;width:1px;height:349.25px;background:#dee2e6;"></div>
<div style="position:absolute;left:865px;top:266px;width:60px;height:13px;background:#fff;border-radius:2px;"></div>
<div style="position:absolute;left:867px;top:318px;width:47px;height:9px;background:#fff;border-radius:2px;"></div>
<div style="position:absolute;left:864px;top:364px;width:47px;height:9px;background:#fff;border-radius:2px;"></div>
<div style="position:absolute;left:864px;top:412px;width:58px;height:6px;background:#fff;border-radius:2px;"></div>
<div style="position:absolute;left:867px;top:456px;width:66px;height:12px;background:#fff;border-radius:2px;"></div>
<div style="position:absolute;left:864px;top:503px;width:62px;height:11px;background:#fff;border-radius:2px;"></div>
<div style="position:absolute;left:862px;top:549px;width:60px;height:10px;background:#fff;border-radius:2px;"></div>
</body></html>
